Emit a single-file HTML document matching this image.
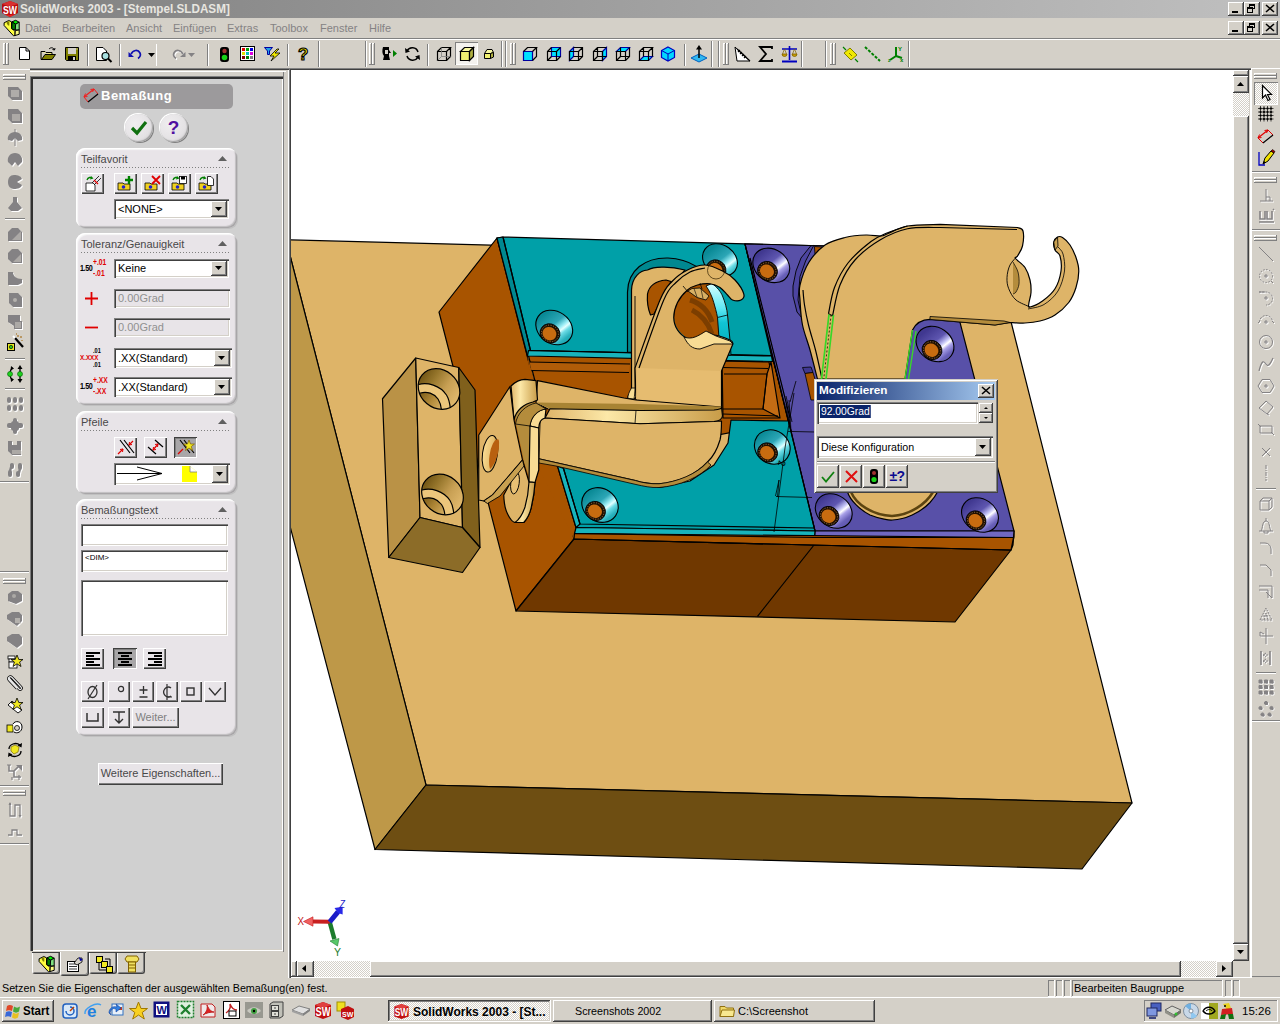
<!DOCTYPE html>
<html lang="de">
<head>
<meta charset="utf-8">
<title>SolidWorks 2003 - [Stempel.SLDASM]</title>
<style>
*{box-sizing:border-box;margin:0;padding:0}
html,body{width:1280px;height:1024px;overflow:hidden;background:#d4d0c8;font-family:"Liberation Sans",sans-serif;font-size:11px;color:#000}
.a{position:absolute}
.raised{box-shadow:inset -1px -1px #404040,inset 1px 1px #fff,inset -2px -2px #808080,inset 2px 2px #d4d0c8;background:#d4d0c8}
.sunken{box-shadow:inset -1px -1px #fff,inset 1px 1px #808080,inset -2px -2px #d4d0c8,inset 2px 2px #404040}
.thin-r{box-shadow:inset -1px -1px #808080,inset 1px 1px #fff}
.thin-s{box-shadow:inset -1px -1px #fff,inset 1px 1px #808080}
#title{left:0;top:0;width:1280px;height:18px;background:linear-gradient(90deg,#808080 0%,#c0c0c0 100%)}
#title .t{left:20px;top:1px;color:#e8e6e0;font-weight:bold;font-size:13px;line-height:16px;white-space:nowrap;transform:scaleX(.9);transform-origin:0 0}
.wb{width:16px;height:14px}
#menu{left:0;top:18px;width:1280px;height:20px}
#menu span{position:absolute;top:3px;color:#848284;font-size:11px;line-height:14px;white-space:nowrap}
.vsep{width:2px;height:22px;border-left:1px solid #808080;border-right:1px solid #fff;top:43px}
.grip{width:3px;height:22px;top:43px;box-shadow:inset -1px -1px #808080,inset 1px 1px #fff}
.hgrip{height:3px;width:22px;box-shadow:inset -1px -1px #808080,inset 1px 1px #fff}
.tbend{width:2px;height:26px;top:41px;border-left:1px solid #808080;border-right:1px solid #fff}
svg{position:absolute;overflow:visible}
.chk{background:repeating-conic-gradient(#fff 0 25%,#d4d0c8 0 50%) 0 0/2px 2px}
.ic{width:16px;height:16px}
</style>
</head>
<body>
<!-- TITLE BAR -->
<div id="title" class="a">
 <svg class="a" style="left:2px;top:1px" width="16" height="16" viewBox="0 0 16 16"><path d="M0 3L8 0L16 3L16 12L8 16L0 12Z" fill="#b80c0c"/><path d="M0 3L8 0L16 3L8 5.500Z" fill="#d83030"/><path d="M2 13L8 16L14 13L8 14Z" fill="#e82020"/><text x="1" y="12.800" font-family="Liberation Sans,sans-serif" font-size="11.500" font-weight="bold" fill="#fff" textLength="14" lengthAdjust="spacingAndGlyphs">SW</text></svg>
 <div class="a t">SolidWorks 2003 - [Stempel.SLDASM]</div>
 <div class="a wb raised" style="left:1228px;top:2px"><div class="a" style="left:4px;top:9px;width:6px;height:2px;background:#000"></div></div>
 <div class="a wb raised" style="left:1244px;top:2px"><div class="a" style="left:5px;top:2px;width:6px;height:5px;border:1px solid #000;border-top-width:2px"></div><div class="a" style="left:3px;top:5px;width:6px;height:6px;border:1px solid #000;border-top-width:2px;background:#d4d0c8"></div></div>
 <div class="a wb raised" style="left:1262px;top:2px"><svg style="left:4px;top:3px" width="8" height="7" viewBox="0 0 8 7"><path d="M0 0L8 7M8 0L0 7" stroke="#000" stroke-width="1.6"/></svg></div>
</div>
<!-- MENU BAR -->
<div id="menu" class="a">
 <svg style="left:3px;top:1px" width="18" height="18" viewBox="0 0 18 18"><path d="M1.100 3.800L5.800 1.500L8.500 2.800L8.500 9L12 12.500L12 16.500L10.500 16.800L1.100 6.500Z" fill="#ffff40" stroke="#000"/><path d="M3.300 3.400L6.300 2L6.300 6.500L5 6.500Z" fill="#808000"/><path d="M9 2.800L12.600 1.300L16.200 3.200L12.600 5.200Z" fill="#00f000" stroke="#000"/><path d="M9 2.800L12.600 5.200L12.300 11L8.800 10Z" fill="#008000" stroke="#000"/><path d="M12.600 5.200L16.200 3.200L16.200 11L12.300 11Z" fill="#80e080" stroke="#000"/><path d="M12.300 11.500L16.200 11L16.200 15.300L12 16.500Z" fill="#ffff80" stroke="#000"/></svg>
 <span style="left:25px">Datei</span><span style="left:62px">Bearbeiten</span><span style="left:126px">Ansicht</span><span style="left:173px">Einfügen</span><span style="left:227px">Extras</span><span style="left:270px">Toolbox</span><span style="left:320px">Fenster</span><span style="left:369px">Hilfe</span>
 <div class="a wb raised" style="left:1228px;top:3px"><div class="a" style="left:4px;top:9px;width:6px;height:2px;background:#000"></div></div>
 <div class="a wb raised" style="left:1244px;top:3px"><div class="a" style="left:5px;top:2px;width:6px;height:5px;border:1px solid #000;border-top-width:2px"></div><div class="a" style="left:3px;top:5px;width:6px;height:6px;border:1px solid #000;border-top-width:2px;background:#d4d0c8"></div></div>
 <div class="a wb raised" style="left:1262px;top:3px"><svg style="left:4px;top:3px" width="8" height="7" viewBox="0 0 8 7"><path d="M0 0L8 7M8 0L0 7" stroke="#000" stroke-width="1.6"/></svg></div>
</div>
<div class="a" style="left:0;top:38px;width:1280px;height:1px;background:#808080"></div>
<div class="a" style="left:0;top:39px;width:1280px;height:1px;background:#fff"></div>
<!-- TOOLBARS -->
<div id="toolbars" class="a" style="left:0;top:40px;width:1280px;height:28px">
<div class="a grip" style="left:3px;top:3px"></div><div class="a grip" style="left:6px;top:3px"></div>
<!-- new -->
<svg style="left:18px;top:7px" width="13" height="14" viewBox="0 0 13 14"><path d="M1.5 .5H8L11.5 4V12.5H1.5Z" fill="#fff" stroke="#000"/><path d="M8 .5V4H11.5" fill="none" stroke="#000"/></svg>
<!-- open -->
<svg style="left:40px;top:6px" width="17" height="15" viewBox="0 0 17 15"><path d="M1 5.5H5L6 6.5H12V9" fill="#f8f080" stroke="#000"/><path d="M1 5.5V13.5H12L15.5 8.5H5L1.5 13.5" fill="#808000" stroke="#000"/><path d="M9 3C11 1 13.5 1.5 14.5 4M14.5 4L12.5 3.5M14.5 4L15 2" fill="none" stroke="#000"/></svg>
<!-- save -->
<svg style="left:65px;top:7px" width="15" height="15" viewBox="0 0 15 15"><path d="M.5 .5H13.5V13.5H1.5L.5 12.5Z" fill="#808000" stroke="#000"/><rect x="3" y="1" width="8" height="6" fill="#d4d0c8"/><rect x="3" y="9" width="8" height="4.5" fill="#000"/><rect x="8" y="10" width="2" height="3" fill="#d4d0c8"/><rect x="11.5" y="1.5" width="1" height="1" fill="#fff"/></svg>
<div class="a vsep" style="left:87px;top:4px"></div>
<!-- preview -->
<svg style="left:96px;top:7px" width="17" height="16" viewBox="0 0 17 16"><path d="M.5 .5H7L10.5 4V13.5H.5Z" fill="#fff" stroke="#000"/><circle cx="9.5" cy="9" r="3.5" fill="#a8e0e0" stroke="#000" stroke-width="1.2"/><path d="M12 11.5L15.5 15" stroke="#000" stroke-width="2"/></svg>
<div class="a vsep" style="left:119px;top:4px"></div>
<!-- undo -->
<svg style="left:128px;top:9px" width="14" height="11" viewBox="0 0 14 11"><path d="M3 5C5 1 10 0 12 4C13 6 12 8 10 9.5" fill="none" stroke="#1010b0" stroke-width="1.7"/><path d="M.5 3L6 8H.5Z" fill="#1010b0"/></svg>
<svg style="left:148px;top:13px" width="7" height="4" viewBox="0 0 7 4"><path d="M0 0H7L3.5 4Z" fill="#000"/></svg>
<div class="a" style="left:156px;top:4px;width:1px;height:22px;background:#fff"></div>
<!-- redo (disabled) -->
<svg style="left:172px;top:9px" width="14" height="11" viewBox="0 0 14 11"><path d="M11 5C9 1 4 0 2 4C1 6 2 8 4 9.5" fill="none" stroke="#fff" stroke-width="1.7" transform="translate(1,1)"/><path d="M11 5C9 1 4 0 2 4C1 6 2 8 4 9.5" fill="none" stroke="#848284" stroke-width="1.7"/><path d="M13.5 3L8 8H13.5Z" fill="#848284"/></svg>
<svg style="left:188px;top:13px" width="7" height="4" viewBox="0 0 7 4"><path d="M0 0H7L3.5 4Z" fill="#848284"/></svg>
<div class="a vsep" style="left:207px;top:4px"></div>
<!-- traffic light -->
<svg style="left:219px;top:6px" width="11" height="17" viewBox="0 0 11 17"><rect x="1" y="1" width="9" height="15" rx="3" fill="#000"/><circle cx="5.5" cy="5" r="2.2" fill="#a03030"/><circle cx="5.5" cy="11.5" r="2.8" fill="#18d018"/></svg>
<!-- palette -->
<svg style="left:240px;top:6px" width="15" height="15" viewBox="0 0 15 15"><rect x=".5" y=".5" width="14" height="14" fill="#fff" stroke="#000"/><rect x="2" y="2" width="3" height="3" fill="#e00000"/><rect x="6" y="2" width="3" height="3" fill="#00a000"/><rect x="10" y="2" width="3" height="3" fill="#0000e0"/><rect x="2" y="6" width="3" height="3" fill="#e0e000"/><rect x="6" y="6" width="3" height="3" fill="#00c0c0"/><rect x="10" y="6" width="3" height="3" fill="#e000e0"/><rect x="2" y="10" width="3" height="3" fill="#800000"/><rect x="6" y="10" width="3" height="3" fill="#008000"/><rect x="10" y="10" width="3" height="3" fill="#808080"/></svg>
<!-- filter -->
<svg style="left:264px;top:6px" width="17" height="16" viewBox="0 0 17 16"><path d="M.5 1.5H8.5L5.5 5V8.5H3.5V5Z" fill="#20a0e8" stroke="#0000a0"/><path d="M13 3L6 10H10L7 15L16 7H11L15 3Z" fill="#f0e800" stroke="#000" stroke-width=".8"/></svg>
<div class="a vsep" style="left:287px;top:4px"></div>
<!-- help ? -->
<svg style="left:298px;top:5px" width="11" height="17" viewBox="0 0 11 17"><text x="0" y="14.5" font-family="Liberation Sans,sans-serif" font-weight="bold" font-size="17" fill="#f0e000" stroke="#000" stroke-width="1.1">?</text></svg>
<div class="a tbend" style="left:318px;top:1px"></div>
<!-- toolbar 2 -->
<div class="a tbend" style="left:365px;top:1px"></div>
<div class="a grip" style="left:369px;top:3px"></div><div class="a grip" style="left:372px;top:3px"></div>
<svg style="left:381px;top:6px" width="17" height="16" viewBox="0 0 17 16"><path d="M2 1H8V4L10 7H8V10L9 14H2L3 10C1 8 1 4 2 1Z" fill="#000"/><rect x="4" y="4" width="3" height="4" fill="#d4d0c8"/><path d="M12 4L16 7.5L12 11Z" fill="#008000"/></svg>
<svg style="left:404px;top:6px" width="17" height="16" viewBox="0 0 17 16"><path d="M14 6A6 6 0 0 0 3 5M3 10A6 6 0 0 0 14 11" fill="none" stroke="#000" stroke-width="1.5"/><path d="M1 2L1.5 7L6 5.5Z M16 14L15.5 9L11 10.5Z" fill="#000"/></svg>
<div class="a vsep" style="left:427px;top:4px"></div>
<svg style="left:436px;top:6px" width="16" height="16" viewBox="0 0 16 16"><path d="M1.5 5.5H10.5V14.5H1.5Z M1.5 5.5L5.5 1.5H14.5L10.5 5.5 M14.5 1.5V10.5L10.5 14.5" fill="none" stroke="#000" stroke-width="1.2"/><path d="M5.5 1.5V10.5H14.5M5.5 10.5L1.5 14.5" fill="none" stroke="#808080" stroke-width=".8"/></svg>
<div class="a" style="left:455px;top:2px;width:23px;height:23px;background:#f4f2ee;box-shadow:inset 1px 1px #808080,inset -1px -1px #fff"></div>
<svg style="left:459px;top:6px" width="16" height="16" viewBox="0 0 16 16"><path d="M1.5 5.5H10.5V14.5H1.5Z" fill="#f0f070" stroke="#000" stroke-width="1.2"/><path d="M1.5 5.5L5.5 1.5H14.5L10.5 5.5Z" fill="#f8f8a0" stroke="#000" stroke-width="1.2"/><path d="M14.5 1.5V10.5L10.5 14.5V5.5Z" fill="#b0b040" stroke="#000" stroke-width="1.2"/></svg>
<svg style="left:483px;top:8px" width="12" height="12" viewBox="0 0 12 12"><path d="M1.5 5.5H7.5V10.5H1.5Z" fill="#f0f070" stroke="#000"/><path d="M1.5 5.5L4 1.5H9L10.5 4.5L7.5 5.5Z" fill="#f8f8a0" stroke="#000"/><path d="M10.5 4.5V9L7.5 10.5V5.5Z" fill="#b0b040" stroke="#000"/></svg>
<div class="a tbend" style="left:501px;top:1px"></div>
<!-- toolbar 3: view cubes -->
<div class="a tbend" style="left:505px;top:1px"></div>
<div class="a grip" style="left:510px;top:3px"></div><div class="a grip" style="left:513px;top:3px"></div>
<svg style="left:522px;top:6px" width="16" height="16" viewBox="0 0 16 16"><path d="M1.5 5.5H10.5V14.5H1.5Z" fill="#00e0ff" stroke="#0000a0" stroke-width="1.2"/><path d="M1.5 5.5L5.5 1.5H14.5L10.5 5.5 M14.5 1.5V10.5L10.5 14.5" fill="none" stroke="#000" stroke-width="1.2"/></svg>
<svg style="left:546px;top:6px" width="16" height="16" viewBox="0 0 16 16"><path d="M5.5 1.5H14.5V10.5H5.5Z" fill="#00e0ff" stroke="#0000a0" stroke-width="1.2"/><path d="M1.5 5.5H10.5V14.5H1.5Z M1.5 5.5L5.5 1.5M10.5 5.5L14.5 1.5M10.5 14.5L14.5 10.5M1.5 14.5L5.5 10.5" fill="none" stroke="#000" stroke-width="1.2"/></svg>
<svg style="left:568px;top:6px" width="16" height="16" viewBox="0 0 16 16"><path d="M1.5 5.5L5.5 1.5V10.5L1.5 14.5Z" fill="#00e0ff" stroke="#0000a0" stroke-width="1.2"/><path d="M1.5 5.5H10.5V14.5H1.5Z M5.5 1.5H14.5V10.5H5.5M10.5 5.5L14.5 1.5M10.5 14.5L14.5 10.5" fill="none" stroke="#000" stroke-width="1.2"/></svg>
<svg style="left:592px;top:6px" width="16" height="16" viewBox="0 0 16 16"><path d="M10.5 5.5L14.5 1.5V10.5L10.5 14.5Z" fill="#00e0ff" stroke="#0000a0" stroke-width="1.2"/><path d="M1.5 5.5H10.5V14.5H1.5Z M1.5 5.5L5.5 1.5H14.5M5.5 1.5V10.5H14.5M1.5 14.5L5.5 10.5" fill="none" stroke="#000" stroke-width="1.2"/></svg>
<svg style="left:615px;top:6px" width="16" height="16" viewBox="0 0 16 16"><path d="M1.5 5.5L5.5 1.5H14.5L10.5 5.5Z" fill="#00e0ff" stroke="#0000a0" stroke-width="1.2"/><path d="M1.5 5.5H10.5V14.5H1.5Z M14.5 1.5V10.5L10.5 14.5M5.5 1.5V10.5H14.5M1.5 14.5L5.5 10.5" fill="none" stroke="#000" stroke-width="1.2"/></svg>
<svg style="left:638px;top:6px" width="16" height="16" viewBox="0 0 16 16"><path d="M1.5 14.5L5.5 10.5H14.5L10.5 14.5Z" fill="#00e0ff" stroke="#0000a0" stroke-width="1.2"/><path d="M1.5 5.5H10.5V14.5H1.5Z M1.5 5.5L5.5 1.5H14.5L10.5 5.5M14.5 1.5V10.5M5.5 1.5V10.5" fill="none" stroke="#000" stroke-width="1.2"/></svg>
<svg style="left:660px;top:6px" width="16" height="16" viewBox="0 0 16 16"><path d="M8 1L14.5 4.5V11.5L8 15L1.5 11.5V4.5Z" fill="#00d8ff" stroke="#0000c0" stroke-width="1.2"/><path d="M1.5 4.5L8 8L14.5 4.5M8 8V15" fill="none" stroke="#0000c0" stroke-width="1"/></svg>
<div class="a vsep" style="left:684px;top:4px"></div>
<svg style="left:690px;top:5px" width="18" height="18" viewBox="0 0 18 18"><path d="M1 13L9 9L17 13L9 17Z" fill="#30b8f0" stroke="#0060c0"/><path d="M9 13V3" stroke="#000" stroke-width="1.5"/><path d="M9 0L12 4.5H6Z" fill="#000"/></svg>
<div class="a tbend" style="left:711px;top:1px"></div>
<!-- toolbar 4 -->
<div class="a tbend" style="left:718px;top:1px"></div>
<div class="a grip" style="left:723px;top:3px"></div><div class="a grip" style="left:726px;top:3px"></div>
<svg style="left:734px;top:6px" width="17" height="16" viewBox="0 0 17 16"><path d="M1 1L16 15H3Z" fill="#fff" stroke="#000" stroke-width="1"/><path d="M3 3L16 15M4 6l2-2M6 8l2-2M8 10l2-2M10 12l2-2" stroke="#000" stroke-width="1.2" fill="none"/></svg>
<svg style="left:759px;top:6px" width="14" height="16" viewBox="0 0 14 16"><path d="M13 3V1H1L7 8L1 15H13V13" fill="none" stroke="#000" stroke-width="1.8"/></svg>
<svg style="left:781px;top:5px" width="17" height="18" viewBox="0 0 17 18"><path d="M8.5 1V15M1 4H16" stroke="#0000c0" stroke-width="1.6"/><path d="M1 16.5H16" stroke="#0000c0" stroke-width="2"/><path d="M1 9H6A2.5 2.5 0 0 1 1 9ZM11 9H16A2.5 2.5 0 0 1 11 9Z" fill="#c8a000" stroke="#806000" stroke-width=".8"/><path d="M3.5 4L1.5 9M3.5 4L5.5 9M13.5 4L11.5 9M13.5 4L15.5 9" stroke="#806000" stroke-width=".7"/></svg>
<div class="a tbend" style="left:801px;top:1px"></div>
<!-- toolbar 5 -->
<div class="a tbend" style="left:825px;top:1px"></div>
<div class="a grip" style="left:830px;top:3px"></div><div class="a grip" style="left:833px;top:3px"></div>
<svg style="left:841px;top:5px" width="18" height="18" viewBox="0 0 18 18"><path d="M9 3L16 10L10 15L3 8Z" fill="#f0e800" stroke="#808000"/><path d="M2 2L5 5M14 14L17 17" stroke="#008000" stroke-width="1.2"/><path d="M8 8L11 11" stroke="#808000"/></svg>
<svg style="left:864px;top:6px" width="17" height="16" viewBox="0 0 17 16"><path d="M1 1L16 15" stroke="#008000" stroke-width="2" stroke-dasharray="3 1.5"/></svg>
<svg style="left:888px;top:5px" width="17" height="17" viewBox="0 0 17 17"><path d="M8 2V11L2 15M8 11L14 13" stroke="#008000" stroke-width="2" fill="none"/><text x="10" y="6" font-size="6" font-family="Liberation Sans,sans-serif" font-weight="bold" fill="#008000">Y</text><text x="12" y="17" font-size="6" font-family="Liberation Sans,sans-serif" font-weight="bold" fill="#008000">x</text><text x="0" y="17" font-size="5" font-family="Liberation Sans,sans-serif" font-weight="bold" fill="#008000">z</text></svg>
<div class="a tbend" style="left:908px;top:1px"></div>

</div>
<div id="tbline" class="a" style="left:30px;top:68px;width:259px;height:2px;border-top:1px solid #808080;border-bottom:1px solid #404040"></div><div class="a" style="left:0;top:69px;width:30px;height:1px;background:#fff"></div><div class="a" style="left:30px;top:71px;width:256px;height:1px;background:#fff"></div>
<!-- LEFT ICON COLUMN -->
<div id="leftcol" class="a" style="left:0;top:70px;width:30px;height:908px">
<div class="a hgrip" style="left:3px;top:4px;width:23px"></div><div class="a hgrip" style="left:3px;top:7px;width:23px"></div>
<svg style="left:6.0px;top:15.0px" width="18" height="18" viewBox="0 0 18 18"><g transform="translate(1,1)" fill="#fff" stroke="#fff" stroke-width="0"><path d="M2 2H12L16 6V15H6L2 11Z"/><rect x="5" y="5" width="8" height="7" fill="#d4d0c8" stroke="none" opacity=".55"/></g><g fill="#848284" stroke="#848284" stroke-width="0"><path d="M2 2H12L16 6V15H6L2 11Z"/><rect x="5" y="5" width="8" height="7" fill="#d4d0c8" stroke="none" opacity=".55"/></g></svg>
<svg style="left:6.0px;top:37.0px" width="18" height="18" viewBox="0 0 18 18"><g transform="translate(1,1)" fill="#fff" stroke="#fff" stroke-width="0"><path d="M2 2H12L16 6V16H6L2 12Z"/><rect x="6" y="7" width="8" height="7" fill="#d4d0c8" opacity=".5"/></g><g fill="#848284" stroke="#848284" stroke-width="0"><path d="M2 2H12L16 6V16H6L2 12Z"/><rect x="6" y="7" width="8" height="7" fill="#d4d0c8" opacity=".5"/></g></svg>
<svg style="left:6.0px;top:59.0px" width="18" height="18" viewBox="0 0 18 18"><g transform="translate(1,1)" fill="#fff" stroke="#fff" stroke-width="0"><path d="M9 3C14 3 17 7 16 11L12 12L9 9L6 12L2 11C1 7 4 3 9 3Z"/><rect x="8.5" y="0" width="1" height="17"/></g><g fill="#848284" stroke="#848284" stroke-width="0"><path d="M9 3C14 3 17 7 16 11L12 12L9 9L6 12L2 11C1 7 4 3 9 3Z"/><rect x="8.5" y="0" width="1" height="17"/></g></svg>
<svg style="left:6.0px;top:81.0px" width="18" height="18" viewBox="0 0 18 18"><g transform="translate(1,1)" fill="#fff" stroke="#fff" stroke-width="0"><path d="M9 2C14 2 17 6 16 11L12 15L9 11L6 15L2 11C1 6 4 2 9 2Z"/></g><g fill="#848284" stroke="#848284" stroke-width="0"><path d="M9 2C14 2 17 6 16 11L12 15L9 11L6 15L2 11C1 6 4 2 9 2Z"/></g></svg>
<svg style="left:6.0px;top:103.0px" width="18" height="18" viewBox="0 0 18 18"><g transform="translate(1,1)" fill="#fff" stroke="#fff" stroke-width="0"><path d="M8 2C12 2 15 3 16 6L11 9L16 12C15 15 12 16 8 16C4 16 2 13 2 9C2 5 4 2 8 2Z"/></g><g fill="#848284" stroke="#848284" stroke-width="0"><path d="M8 2C12 2 15 3 16 6L11 9L16 12C15 15 12 16 8 16C4 16 2 13 2 9C2 5 4 2 8 2Z"/></g></svg>
<svg style="left:6.0px;top:125.0px" width="18" height="18" viewBox="0 0 18 18"><g transform="translate(1,1)" fill="#fff" stroke="#fff" stroke-width="0"><path d="M7 2H11V7L16 13L12 16H5L2 13L7 7Z"/></g><g fill="#848284" stroke="#848284" stroke-width="0"><path d="M7 2H11V7L16 13L12 16H5L2 13L7 7Z"/></g></svg>
<div class="a" style="left:5px;top:148px;width:20px;height:2px;border-top:1px solid #808080;border-bottom:1px solid #fff"></div>
<svg style="left:6.0px;top:155.0px" width="18" height="18" viewBox="0 0 18 18"><g transform="translate(1,1)" fill="#fff" stroke="#fff" stroke-width="0"><path d="M6 3H12L16 7V16H2V7Z"/><path d="M6 15L15 6V15Z" fill="#d4d0c8" opacity=".5"/></g><g fill="#848284" stroke="#848284" stroke-width="0"><path d="M6 3H12L16 7V16H2V7Z"/><path d="M6 15L15 6V15Z" fill="#d4d0c8" opacity=".5"/></g></svg>
<svg style="left:6.0px;top:177.0px" width="18" height="18" viewBox="0 0 18 18"><g transform="translate(1,1)" fill="#fff" stroke="#fff" stroke-width="0"><path d="M6 2H12L16 6V16H6L2 12V6Z"/><path d="M7 15L15 7V15Z" fill="#d4d0c8" opacity=".5"/></g><g fill="#848284" stroke="#848284" stroke-width="0"><path d="M6 2H12L16 6V16H6L2 12V6Z"/><path d="M7 15L15 7V15Z" fill="#d4d0c8" opacity=".5"/></g></svg>
<svg style="left:6.0px;top:199.0px" width="18" height="18" viewBox="0 0 18 18"><g transform="translate(1,1)" fill="#fff" stroke="#fff" stroke-width="0"><path d="M2 3H7C7 7 10 10 16 10V14L12 16H2Z"/></g><g fill="#848284" stroke="#848284" stroke-width="0"><path d="M2 3H7C7 7 10 10 16 10V14L12 16H2Z"/></g></svg>
<svg style="left:6.0px;top:221.0px" width="18" height="18" viewBox="0 0 18 18"><g transform="translate(1,1)" fill="#fff" stroke="#fff" stroke-width="0"><path d="M3 2H12L16 6V16H7L3 12Z"/><circle cx="9" cy="9" r="2" fill="#d4d0c8" opacity=".6"/></g><g fill="#848284" stroke="#848284" stroke-width="0"><path d="M3 2H12L16 6V16H7L3 12Z"/><circle cx="9" cy="9" r="2" fill="#d4d0c8" opacity=".6"/></g></svg>
<svg style="left:6.0px;top:243.0px" width="18" height="18" viewBox="0 0 18 18"><g transform="translate(1,1)" fill="#fff" stroke="#fff" stroke-width="0"><path d="M2 2H14V8H16V16H8V13L2 9Z"/><rect x="9" y="9" width="6" height="6" fill="#d4d0c8" opacity=".5"/></g><g fill="#848284" stroke="#848284" stroke-width="0"><path d="M2 2H14V8H16V16H8V13L2 9Z"/><rect x="9" y="9" width="6" height="6" fill="#d4d0c8" opacity=".5"/></g></svg>
<svg style="left:6.0px;top:264.0px" width="18" height="18" viewBox="0 0 18 18"><rect x="1.500" y="9.500" width="7" height="7" fill="#e8e820" stroke="#000"/><circle cx="5" cy="13" r="1.700" fill="#20c020" stroke="#000" stroke-width=".6"/><path d="M9 4L17 13" stroke="#000" stroke-width="2.200"/><path d="M7 2L9 4" stroke="#fff" stroke-width="2"/><path d="M12 1v2M14 3h2M16 6v1M10 0h1" stroke="#a06000" stroke-width="1"/></svg>
<div class="a" style="left:5px;top:288px;width:20px;height:2px;border-top:1px solid #808080;border-bottom:1px solid #fff"></div>
<svg style="left:6.0px;top:294.5px" width="18" height="18" viewBox="0 0 18 18"><path d="M7 3C3 5 3 13 7 15" fill="none" stroke="#000" stroke-width="1.300"/><path d="M5 1L8 3.500L4.500 5.500ZM5 17L8 14.500L4.500 12.500Z" fill="#000"/><circle cx="4" cy="9" r="2.500" fill="#20d020" stroke="#006000" stroke-width=".6"/><path d="M14 2V16" stroke="#000" stroke-width="1.300"/><path d="M14 0L16.500 4H11.500ZM14 18L16.500 14H11.500Z" fill="#000"/><circle cx="14" cy="9" r="2.500" fill="#20d020" stroke="#006000" stroke-width=".6"/></svg>
<div class="a" style="left:5px;top:318px;width:20px;height:2px;border-top:1px solid #808080;border-bottom:1px solid #fff"></div>
<svg style="left:6.0px;top:325.0px" width="18" height="18" viewBox="0 0 18 18"><g transform="translate(1,1)" fill="#fff" stroke="#fff" stroke-width="0"><rect x="1" y="2" width="4" height="6" rx="2"/><rect x="1" y="10" width="4" height="6" rx="2"/><rect x="7" y="2" width="4" height="6" rx="2"/><rect x="7" y="10" width="4" height="6" rx="2"/><rect x="13" y="2" width="4" height="6" rx="2"/><rect x="13" y="10" width="4" height="6" rx="2"/></g><g fill="#848284" stroke="#848284" stroke-width="0"><rect x="1" y="2" width="4" height="6" rx="2"/><rect x="1" y="10" width="4" height="6" rx="2"/><rect x="7" y="2" width="4" height="6" rx="2"/><rect x="7" y="10" width="4" height="6" rx="2"/><rect x="13" y="2" width="4" height="6" rx="2"/><rect x="13" y="10" width="4" height="6" rx="2"/></g></svg>
<svg style="left:6.0px;top:347.0px" width="18" height="18" viewBox="0 0 18 18"><g transform="translate(1,1)" fill="#fff" stroke="#fff" stroke-width="0"><rect x="7" y="1" width="4" height="6" rx="2"/><rect x="7" y="11" width="4" height="6" rx="2"/><rect x="1" y="6" width="6" height="5" rx="2"/><rect x="11" y="6" width="6" height="5" rx="2"/><rect x="5" y="4" width="8" height="10" rx="3"/></g><g fill="#848284" stroke="#848284" stroke-width="0"><rect x="7" y="1" width="4" height="6" rx="2"/><rect x="7" y="11" width="4" height="6" rx="2"/><rect x="1" y="6" width="6" height="5" rx="2"/><rect x="11" y="6" width="6" height="5" rx="2"/><rect x="5" y="4" width="8" height="10" rx="3"/></g></svg>
<svg style="left:6.0px;top:369.0px" width="18" height="18" viewBox="0 0 18 18"><g transform="translate(1,1)" fill="#fff" stroke="#fff" stroke-width="0"><path d="M2 2H6V6H11V2H15V16H6L2 12Z"/><rect x="6" y="11" width="9" height="4" fill="#d4d0c8" opacity=".5"/></g><g fill="#848284" stroke="#848284" stroke-width="0"><path d="M2 2H6V6H11V2H15V16H6L2 12Z"/><rect x="6" y="11" width="9" height="4" fill="#d4d0c8" opacity=".5"/></g></svg>
<svg style="left:6.0px;top:391.0px" width="18" height="18" viewBox="0 0 18 18"><g transform="translate(1,1)" fill="#fff" stroke="#fff" stroke-width="0"><rect x="2" y="9" width="4" height="7" rx="2"/><rect x="12" y="2" width="4" height="7" rx="2"/><path d="M6 3L4 10M14 8L12 15" stroke-width="2.500" fill="none"/><rect x="4" y="2" width="4" height="6" rx="2"/><rect x="10" y="10" width="4" height="6" rx="2"/></g><g fill="#848284" stroke="#848284" stroke-width="0"><rect x="2" y="9" width="4" height="7" rx="2"/><rect x="12" y="2" width="4" height="7" rx="2"/><path d="M6 3L4 10M14 8L12 15" stroke-width="2.500" fill="none"/><rect x="4" y="2" width="4" height="6" rx="2"/><rect x="10" y="10" width="4" height="6" rx="2"/></g></svg>
<div class="a" style="left:0px;top:411px;width:29px;height:2px;border-top:1px solid #808080;border-bottom:1px solid #fff"></div>
<div class="a" style="left:0px;top:501px;width:29px;height:2px;border-top:1px solid #808080;border-bottom:1px solid #fff"></div>
<div class="a hgrip" style="left:3px;top:508px;width:23px"></div><div class="a hgrip" style="left:3px;top:511px;width:23px"></div>
<svg style="left:6.0px;top:518.0px" width="18" height="18" viewBox="0 0 18 18"><g transform="translate(1,1)" fill="#fff" stroke="#fff" stroke-width="0"><path d="M2 6L6 3H12L16 6V13L10 16L2 13Z"/><circle cx="8" cy="8" r="2" fill="#d4d0c8" opacity=".5"/></g><g fill="#848284" stroke="#848284" stroke-width="0"><path d="M2 6L6 3H12L16 6V13L10 16L2 13Z"/><circle cx="8" cy="8" r="2" fill="#d4d0c8" opacity=".5"/></g></svg>
<svg style="left:6.0px;top:540.0px" width="18" height="18" viewBox="0 0 18 18"><g transform="translate(1,1)" fill="#fff" stroke="#fff" stroke-width="0"><path d="M1 5L6 2H13L16 5V11L11 16L1 9Z"/><rect x="9" y="8" width="5" height="5" fill="#d4d0c8" opacity=".6"/></g><g fill="#848284" stroke="#848284" stroke-width="0"><path d="M1 5L6 2H13L16 5V11L11 16L1 9Z"/><rect x="9" y="8" width="5" height="5" fill="#d4d0c8" opacity=".6"/></g></svg>
<svg style="left:6.0px;top:562.0px" width="18" height="18" viewBox="0 0 18 18"><g transform="translate(1,1)" fill="#fff" stroke="#fff" stroke-width="0"><path d="M1 5L6 2H13L16 5V12L11 16L1 9Z"/></g><g fill="#848284" stroke="#848284" stroke-width="0"><path d="M1 5L6 2H13L16 5V12L11 16L1 9Z"/></g></svg>
<svg style="left:6.0px;top:583.0px" width="18" height="18" viewBox="0 0 18 18"><rect x="2" y="3" width="7" height="3" fill="#fff" stroke="#000" stroke-width=".8"/><rect x="3" y="6" width="7" height="3" fill="#fff" stroke="#000" stroke-width=".8"/><rect x="3" y="9" width="8" height="6" fill="#fff" stroke="#000" stroke-width=".8"/><path d="M11 2L12.800 6.500H17L13.600 9L15 13.500L11 10.800L7 13.500L8.400 9L5 6.500H9.200Z" fill="#f0e820" stroke="#000" stroke-width=".8"/></svg>
<svg style="left:6.0px;top:605.0px" width="18" height="18" viewBox="0 0 18 18"><path d="M3 3L13 14C14.500 15.500 16.500 13.500 15 12L6 2.500C4 .5 1 3 3 5L11 13.500" fill="none" stroke="#000" stroke-width="2.600"/><path d="M3 3L13 14C14.500 15.500 16.500 13.500 15 12L6 2.500C4 .5 1 3 3 5L11 13.500" fill="none" stroke="#e8e8e8" stroke-width="1.200"/></svg>
<svg style="left:6.0px;top:627.0px" width="18" height="18" viewBox="0 0 18 18"><path d="M2 8L6 4L16 13L12 16Z" fill="#fff" stroke="#000" stroke-width=".9"/><path d="M11 1L12.800 5.500H17L13.600 8L15 12.500L11 9.800L7 12.500L8.400 8L5 5.500H9.200Z" fill="#f0e820" stroke="#000" stroke-width=".8"/></svg>
<svg style="left:6.0px;top:649.0px" width="18" height="18" viewBox="0 0 18 18"><rect x="1" y="6" width="6" height="7" fill="#f0e820" stroke="#000" stroke-width=".8"/><path d="M7 5C9 1 16 2 16 8C16 13 11 15 8 13" fill="#fff" stroke="#000" stroke-width="1"/><circle cx="11" cy="9" r="2.500" fill="#d4d0c8" stroke="#000" stroke-width=".8"/></svg>
<svg style="left:6.0px;top:671.0px" width="18" height="18" viewBox="0 0 18 18"><path d="M5 6L9 4L13 6L12 11L8 13L5 10Z" fill="#f0e820" stroke="#807000" stroke-width=".7"/><path d="M3 8C3 3 10 1 14 4M15 10C15 15 8 17 4 14" fill="none" stroke="#000" stroke-width="1.300"/><path d="M16 2L15.500 6.500L11.500 4.500ZM2 16L2.500 11.500L6.500 13.500Z" fill="#000"/></svg>
<svg style="left:6.0px;top:693.0px" width="18" height="18" viewBox="0 0 18 18"><g transform="translate(1,1)" fill="#fff" stroke="#fff" stroke-width="0"><path d="M3 2V8H8V14H15M8 8L13 3" fill="none" stroke-width="1.600"/><path d="M10 2H16V8Z"/><path d="M1 2H5M6 14V17M13 12V17" stroke-width="1.200" fill="none"/></g><g fill="#848284" stroke="#848284" stroke-width="0"><path d="M3 2V8H8V14H15M8 8L13 3" fill="none" stroke-width="1.600"/><path d="M10 2H16V8Z"/><path d="M1 2H5M6 14V17M13 12V17" stroke-width="1.200" fill="none"/></g></svg>
<div class="a" style="left:0px;top:715px;width:29px;height:2px;border-top:1px solid #808080;border-bottom:1px solid #fff"></div>
<div class="a hgrip" style="left:3px;top:720px;width:23px"></div><div class="a hgrip" style="left:3px;top:723px;width:23px"></div>
<svg style="left:6.0px;top:731.0px" width="18" height="18" viewBox="0 0 18 18"><g transform="translate(1,1)" fill="#fff" stroke="#fff" stroke-width="0"><path d="M4 2V15H9V4H14V15" fill="none" stroke-width="1.300"/><path d="M4 1L5.500 4H2.500ZM14 17L15.500 14H12.500Z"/></g><g fill="#848284" stroke="#848284" stroke-width="0"><path d="M4 2V15H9V4H14V15" fill="none" stroke-width="1.300"/><path d="M4 1L5.500 4H2.500ZM14 17L15.500 14H12.500Z"/></g></svg>
<svg style="left:6.0px;top:752.0px" width="18" height="18" viewBox="0 0 18 18"><g transform="translate(1,1)" fill="#fff" stroke="#fff" stroke-width="0"><path d="M2 13H6V8H11V13H16" fill="none" stroke-width="1.300"/></g><g fill="#848284" stroke="#848284" stroke-width="0"><path d="M2 13H6V8H11V13H16" fill="none" stroke-width="1.300"/></g></svg>
<div class="a" style="left:0px;top:773px;width:29px;height:2px;border-top:1px solid #808080;border-bottom:1px solid #fff"></div>
</div>
<!-- PROPERTY PANEL -->
<div id="panel" class="a" style="left:30px;top:76px;width:254px;height:900px">
<div class="a" style="left:0;top:0;width:253px;height:875px;background:#d0d0d0;box-shadow:inset 1px 1px #808080,inset 3px 3px #303030,inset -1px -1px #fff,inset -2px -2px #d4d0c8"></div>
<div class="a " style="left:50px;top:8px;width:153px;height:25px;background:#9c9a9c;border-radius:5px"><svg style="left:3px;top:4px" width="17" height="17" viewBox="0 0 17 17"><path d="M1 9L11 1" stroke="#f02020" stroke-width="1.2"/><path d="M1 9L5 14M11 1L15 6" stroke="#f02020"/><path d="M5 14L15 6" stroke="#000" stroke-width="1.2"/><path d="M2.5 5.500L1 9L4.500 8.500M9.500 4L11 1L7.500 1.500" stroke="#f02020" fill="none"/></svg><div class="a" style="left:21px;top:4px;color:#fff;font-weight:bold;font-size:13px;line-height:16px;letter-spacing:.5px;white-space:nowrap">Bemaßung</div></div>
<div class="a" style="left:94.5px;top:38px;width:28px;height:28px;border-radius:50%;background:radial-gradient(circle at 35% 35%,#f0eef0 0,#e4e2e4 60%,#c8c6c8 100%);box-shadow:1px 1px 0 #808080,-1px -1px 0 #fff,inset -1px -1px 1px #a0a0a0"><svg style="left:5px;top:6px" width="18" height="16" viewBox="0 0 18 16"><path d="M2 8L7 13L16 2" fill="none" stroke="#107010" stroke-width="3.2"/></svg></div>
<div class="a" style="left:129.5px;top:38px;width:28px;height:28px;border-radius:50%;background:radial-gradient(circle at 35% 35%,#f0eef0 0,#e4e2e4 60%,#c8c6c8 100%);box-shadow:1px 1px 0 #808080,-1px -1px 0 #fff,inset -1px -1px 1px #a0a0a0"><div class="a" style="left:0;top:3px;width:28px;text-align:center;color:#5010a0;font-weight:bold;font-size:19px;line-height:22px">?</div></div>
<div class="a " style="left:46px;top:72px;width:161px;height:80px;background:#e8e4e8;border-radius:9px;box-shadow:inset 1px 1px 0 #fff,inset 2px 2px 1px #f8f8f8,inset -1px -1px 0 #a8a6a8,inset -2px -2px 1px #c0bec0,1px 1px 0 #c0c0c0"><div class="a" style="left:5px;top:5px;color:#484848;font-size:11px;line-height:13px;white-space:nowrap">Teilfavorit</div><svg style="left:142px;top:8px" width="9" height="5" viewBox="0 0 9 5"><path d="M0 5H9L4.500 0Z" fill="#606060"/></svg><div class="a" style="left:5px;top:19px;width:148px;height:1px;background:repeating-linear-gradient(90deg,#808080 0 1px,transparent 1px 3px)"></div></div>
<div class="a " style="left:51px;top:97px;width:23px;height:21px;background:#e8e4e8;box-shadow:inset 1px 1px #fff,inset -1px -1px #404040,inset -2px -2px #808080"><svg style="left:3px;top:2px" width="17" height="17" viewBox="0 0 17 17"><path d="M2 8H9L11 10V16H2Z" fill="#fff" stroke="#000" stroke-width=".8"/><path d="M3 5C4 2 7 2 8 3" fill="none" stroke="#008000" stroke-width="1.300"/><path d="M7 1L9.500 3.500L6 4.500Z" fill="#008000"/><path d="M8 8L15 1M10 10L17 3" stroke="#000" stroke-width=".8"/><path d="M10 5L14 9" stroke="#e00000" stroke-width="1.200"/></svg></div>
<div class="a " style="left:84px;top:97px;width:23px;height:21px;background:#e8e4e8;box-shadow:inset 1px 1px #fff,inset -1px -1px #404040,inset -2px -2px #808080"><svg style="left:3px;top:2px" width="17" height="17" viewBox="0 0 17 17"><path d="M1 8H6L7 9H13V15H1Z" fill="#f0d020" stroke="#000" stroke-width=".8"/><circle cx="6.500" cy="12" r="1.800" fill="#2020d0"/><path d="M12 1V9M8 5H16" stroke="#008000" stroke-width="2.400"/></svg></div>
<div class="a " style="left:111px;top:97px;width:23px;height:21px;background:#e8e4e8;box-shadow:inset 1px 1px #fff,inset -1px -1px #404040,inset -2px -2px #808080"><svg style="left:3px;top:2px" width="17" height="17" viewBox="0 0 17 17"><path d="M1 8H6L7 9H13V15H1Z" fill="#f0d020" stroke="#000" stroke-width=".8"/><circle cx="6.500" cy="12" r="1.800" fill="#2020d0"/><path d="M8 1L16 9M16 1L8 9" stroke="#e00000" stroke-width="1.800"/></svg></div>
<div class="a " style="left:138px;top:97px;width:23px;height:21px;background:#e8e4e8;box-shadow:inset 1px 1px #fff,inset -1px -1px #404040,inset -2px -2px #808080"><svg style="left:3px;top:2px" width="17" height="17" viewBox="0 0 17 17"><path d="M1 8H6L7 9H13V15H1Z" fill="#f0d020" stroke="#000" stroke-width=".8"/><circle cx="6.500" cy="12" r="1.800" fill="#2020d0"/><rect x="8.500" y="1.500" width="7" height="7" fill="#fff" stroke="#000" stroke-width=".8"/><rect x="10" y="1.500" width="4" height="3" fill="#000"/><path d="M2 5C3 2 6 2 7 3" fill="none" stroke="#008000" stroke-width="1.300"/><path d="M6 1L8.500 3.500L5 4.500Z" fill="#008000"/></svg></div>
<div class="a " style="left:165px;top:97px;width:23px;height:21px;background:#e8e4e8;box-shadow:inset 1px 1px #fff,inset -1px -1px #404040,inset -2px -2px #808080"><svg style="left:3px;top:2px" width="17" height="17" viewBox="0 0 17 17"><path d="M1 8H6L7 9H13V15H1Z" fill="#f0d020" stroke="#000" stroke-width=".8"/><circle cx="6.500" cy="12" r="1.800" fill="#2020d0"/><path d="M9.500 1.500H13L15.500 4V10.500H9.500Z" fill="#fff" stroke="#000" stroke-width=".8"/><path d="M2 5C3 2 6 2 7 3" fill="none" stroke="#008000" stroke-width="1.300"/><path d="M6 1L8.500 3.500L5 4.500Z" fill="#008000"/></svg></div>
<div class="a " style="left:84px;top:123px;width:115px;height:20px;background:#fff;box-shadow:inset 1px 1px #808080,inset 2px 2px #404040,inset -1px -1px #fff,inset -2px -2px #d4d0c8"><div class="a" style="left:4px;top:3px;font-size:11px;line-height:14px;white-space:nowrap">&lt;NONE&gt;</div><div class="a raised" style="left:97px;top:2px;width:16px;height:16px"><svg style="left:4px;top:6px" width="7" height="4" viewBox="0 0 7 4"><path d="M0 0H7L3.500 4Z" fill="#000"/></svg></div></div>
<div class="a " style="left:46px;top:157px;width:161px;height:172px;background:#e8e4e8;border-radius:9px;box-shadow:inset 1px 1px 0 #fff,inset 2px 2px 1px #f8f8f8,inset -1px -1px 0 #a8a6a8,inset -2px -2px 1px #c0bec0,1px 1px 0 #c0c0c0"><div class="a" style="left:5px;top:5px;color:#484848;font-size:11px;line-height:13px;white-space:nowrap">Toleranz/Genauigkeit</div><svg style="left:142px;top:8px" width="9" height="5" viewBox="0 0 9 5"><path d="M0 5H9L4.500 0Z" fill="#606060"/></svg><div class="a" style="left:5px;top:19px;width:148px;height:1px;background:repeating-linear-gradient(90deg,#808080 0 1px,transparent 1px 3px)"></div></div>
<div class="a" style="left:50px;top:182px;width:30px;height:20px;font-size:9px;line-height:9px;font-weight:bold;white-space:nowrap"><span class="a" style="left:0;top:6px;letter-spacing:-.5px;transform:scaleX(.8);transform-origin:0 0">1.50</span><span class="a" style="left:13px;top:0;color:#e00000;transform:scaleX(.75);transform-origin:0 0">+.01</span><span class="a" style="left:13px;top:11px;color:#e00000;transform:scaleX(.75);transform-origin:0 0">-.01</span></div>
<div class="a " style="left:84px;top:183px;width:115px;height:19px;background:#fff;box-shadow:inset 1px 1px #808080,inset 2px 2px #404040,inset -1px -1px #fff,inset -2px -2px #d4d0c8"><div class="a" style="left:4px;top:2px;font-size:11px;line-height:14px;white-space:nowrap">Keine</div><div class="a raised" style="left:97px;top:2px;width:16px;height:15px"><svg style="left:4px;top:5px" width="7" height="4" viewBox="0 0 7 4"><path d="M0 0H7L3.500 4Z" fill="#000"/></svg></div></div>
<svg style="left:55px;top:216px" width="13" height="13" viewBox="0 0 13 13"><path d="M6.500 0V13M0 6.500H13" stroke="#e00000" stroke-width="1.800"/></svg>
<div class="a " style="left:84px;top:213px;width:116px;height:19px;background:#e8e4e8;box-shadow:inset 1px 1px #808080,inset 2px 2px #404040,inset -1px -1px #fff,inset -2px -2px #d4d0c8"><div class="a" style="left:4px;top:2px;font-size:11px;line-height:14px;color:#909090;white-space:nowrap">0.00Grad</div></div>
<svg style="left:55px;top:250px" width="13" height="3" viewBox="0 0 13 3"><path d="M0 1.500H13" stroke="#e00000" stroke-width="1.800"/></svg>
<div class="a " style="left:84px;top:242px;width:116px;height:19px;background:#e8e4e8;box-shadow:inset 1px 1px #808080,inset 2px 2px #404040,inset -1px -1px #fff,inset -2px -2px #d4d0c8"><div class="a" style="left:4px;top:2px;font-size:11px;line-height:14px;color:#909090;white-space:nowrap">0.00Grad</div></div>
<div class="a" style="left:50px;top:271px;width:30px;height:22px;font-size:8px;line-height:8px;font-weight:bold;white-space:nowrap"><span class="a" style="left:13px;top:0;transform:scaleX(.7);transform-origin:0 0">.01</span><span class="a" style="left:0;top:7px;color:#e00000;transform:scaleX(.78);transform-origin:0 0">X.XXX</span><span class="a" style="left:13px;top:14px;transform:scaleX(.7);transform-origin:0 0">.01</span></div>
<div class="a " style="left:84px;top:272px;width:118px;height:20px;background:#fff;box-shadow:inset 1px 1px #808080,inset 2px 2px #404040,inset -1px -1px #fff,inset -2px -2px #d4d0c8"><div class="a" style="left:4px;top:3px;font-size:11px;line-height:14px;white-space:nowrap">.XX(Standard)</div><div class="a raised" style="left:100px;top:2px;width:16px;height:16px"><svg style="left:4px;top:6px" width="7" height="4" viewBox="0 0 7 4"><path d="M0 0H7L3.500 4Z" fill="#000"/></svg></div></div>
<div class="a" style="left:50px;top:300px;width:30px;height:20px;font-size:9px;line-height:9px;font-weight:bold;white-space:nowrap"><span class="a" style="left:0;top:6px;letter-spacing:-.5px;transform:scaleX(.8);transform-origin:0 0">1.50</span><span class="a" style="left:13px;top:0;color:#e00000;transform:scaleX(.75);transform-origin:0 0">+.XX</span><span class="a" style="left:13px;top:11px;color:#e00000;transform:scaleX(.75);transform-origin:0 0">-.XX</span></div>
<div class="a " style="left:84px;top:301px;width:118px;height:20px;background:#fff;box-shadow:inset 1px 1px #808080,inset 2px 2px #404040,inset -1px -1px #fff,inset -2px -2px #d4d0c8"><div class="a" style="left:4px;top:3px;font-size:11px;line-height:14px;white-space:nowrap">.XX(Standard)</div><div class="a raised" style="left:100px;top:2px;width:16px;height:16px"><svg style="left:4px;top:6px" width="7" height="4" viewBox="0 0 7 4"><path d="M0 0H7L3.500 4Z" fill="#000"/></svg></div></div>
<div class="a " style="left:46px;top:335px;width:161px;height:83px;background:#e8e4e8;border-radius:9px;box-shadow:inset 1px 1px 0 #fff,inset 2px 2px 1px #f8f8f8,inset -1px -1px 0 #a8a6a8,inset -2px -2px 1px #c0bec0,1px 1px 0 #c0c0c0"><div class="a" style="left:5px;top:5px;color:#484848;font-size:11px;line-height:13px;white-space:nowrap">Pfeile</div><svg style="left:142px;top:8px" width="9" height="5" viewBox="0 0 9 5"><path d="M0 5H9L4.500 0Z" fill="#606060"/></svg><div class="a" style="left:5px;top:19px;width:148px;height:1px;background:repeating-linear-gradient(90deg,#808080 0 1px,transparent 1px 3px)"></div></div>
<div class="a " style="left:84px;top:361px;width:23px;height:21px;background:#e8e4e8;box-shadow:inset 1px 1px #fff,inset -1px -1px #404040,inset -2px -2px #808080"><svg style="left:3px;top:2px" width="17" height="17" viewBox="0 0 17 17"><path d="M3 1L13 14M7 1L17 14" stroke="#000" stroke-width="1.200"/><path d="M1 15L6 10M16 2L12 6" stroke="#e00000" stroke-width="1.200"/><path d="M6 10L3 10.500M6 10L5.500 13M12 6L15 5.500M12 6L12.500 3" stroke="#e00000"/></svg></div>
<div class="a " style="left:114px;top:361px;width:23px;height:21px;background:#e8e4e8;box-shadow:inset 1px 1px #fff,inset -1px -1px #404040,inset -2px -2px #808080"><svg style="left:3px;top:2px" width="17" height="17" viewBox="0 0 17 17"><path d="M1 8L9 15M8 1L16 8" stroke="#000" stroke-width="1.200"/><path d="M6 11L11 5" stroke="#e00000" stroke-width="1.200"/><path d="M6 11L6.500 8M6 11L9 10.500M11 5L8 5.500M11 5L10.500 8" stroke="#e00000"/></svg></div>
<div class="a " style="left:144px;top:361px;width:23px;height:21px;background:#a8a6a8;box-shadow:inset 1px 1px #404040,inset -1px -1px #fff,inset 2px 2px #808080"><svg style="left:3px;top:2px" width="17" height="17" viewBox="0 0 17 17"><path d="M3 1L13 14M7 1L17 14" stroke="#000" stroke-width="1.200"/><path d="M1 15L6 10" stroke="#e00000" stroke-width="1.200"/><path d="M12 1L13.500 5H17.500L14.300 7.500L15.500 11.500L12 9L8.500 11.500L9.700 7.500L6.500 5H10.500Z" fill="#f0e820" stroke="#806000" stroke-width=".7"/></svg></div>
<div class="a " style="left:84px;top:387px;width:116px;height:22px;background:#fff;box-shadow:inset 1px 1px #808080,inset 2px 2px #404040,inset -1px -1px #fff,inset -2px -2px #d4d0c8"><svg style="left:3px;top:3px" width="90" height="16" viewBox="0 0 90 16"><path d="M0 7.500H45M20 1L45 7.500L20 14" fill="none" stroke="#000" stroke-width="1"/><path d="M65 0H73L80 6V16H65Z" fill="#ffff00"/><path d="M73 0V6H80" fill="#fff" stroke="#808080" stroke-width=".8"/></svg><div class="a raised" style="left:98px;top:2px;width:16px;height:18px"><svg style="left:4px;top:7px" width="7" height="4" viewBox="0 0 7 4"><path d="M0 0H7L3.500 4Z" fill="#000"/></svg></div></div>
<div class="a " style="left:46px;top:423px;width:161px;height:237px;background:#e8e4e8;border-radius:9px;box-shadow:inset 1px 1px 0 #fff,inset 2px 2px 1px #f8f8f8,inset -1px -1px 0 #a8a6a8,inset -2px -2px 1px #c0bec0,1px 1px 0 #c0c0c0"><div class="a" style="left:5px;top:5px;color:#484848;font-size:11px;line-height:13px;white-space:nowrap">Bemaßungstext</div><svg style="left:142px;top:8px" width="9" height="5" viewBox="0 0 9 5"><path d="M0 5H9L4.500 0Z" fill="#606060"/></svg><div class="a" style="left:5px;top:19px;width:148px;height:1px;background:repeating-linear-gradient(90deg,#808080 0 1px,transparent 1px 3px)"></div></div>
<div class="a " style="left:51px;top:448px;width:147px;height:22px;background:#fff;box-shadow:inset 1px 1px #808080,inset 2px 2px #404040,inset -1px -1px #fff,inset -2px -2px #d4d0c8"></div>
<div class="a " style="left:51px;top:474px;width:147px;height:22px;background:#fff;box-shadow:inset 1px 1px #808080,inset 2px 2px #404040,inset -1px -1px #fff,inset -2px -2px #d4d0c8"><div class="a" style="left:4px;top:1px;font-size:8px;line-height:14px;color:#000;white-space:nowrap">&lt;DIM&gt;</div></div>
<div class="a " style="left:51px;top:504px;width:147px;height:56px;background:#fff;box-shadow:inset 1px 1px #808080,inset 2px 2px #404040,inset -1px -1px #fff,inset -2px -2px #d4d0c8"></div>
<div class="a " style="left:51px;top:572px;width:23px;height:21px;background:#e8e4e8;box-shadow:inset 1px 1px #fff,inset -1px -1px #404040,inset -2px -2px #808080"><svg style="left:4px;top:3px" width="16" height="16" viewBox="0 0 16 16"><rect x="1" y="1" width="14" height="2" fill="#000"/><rect x="1" y="4" width="8" height="2" fill="#000"/><rect x="1" y="7" width="14" height="2" fill="#000"/><rect x="1" y="10" width="8" height="2" fill="#000"/><rect x="1" y="13" width="14" height="2" fill="#000"/></svg></div>
<div class="a " style="left:83px;top:572px;width:24px;height:21px;background:#a8a6a8;box-shadow:inset 1px 1px #404040,inset -1px -1px #fff,inset 2px 2px #808080"><svg style="left:4px;top:3px" width="16" height="16" viewBox="0 0 16 16"><rect x="1.0" y="1" width="14" height="2" fill="#000"/><rect x="4.0" y="4" width="8" height="2" fill="#000"/><rect x="1.0" y="7" width="14" height="2" fill="#000"/><rect x="4.0" y="10" width="8" height="2" fill="#000"/><rect x="1.0" y="13" width="14" height="2" fill="#000"/></svg></div>
<div class="a " style="left:113px;top:572px;width:23px;height:21px;background:#e8e4e8;box-shadow:inset 1px 1px #fff,inset -1px -1px #404040,inset -2px -2px #808080"><svg style="left:4px;top:3px" width="16" height="16" viewBox="0 0 16 16"><rect x="1" y="1" width="14" height="2" fill="#000"/><rect x="7" y="4" width="8" height="2" fill="#000"/><rect x="1" y="7" width="14" height="2" fill="#000"/><rect x="7" y="10" width="8" height="2" fill="#000"/><rect x="1" y="13" width="14" height="2" fill="#000"/></svg></div>
<div class="a " style="left:51px;top:605px;width:23px;height:21px;background:#e8e4e8;box-shadow:inset 1px 1px #fff,inset -1px -1px #404040,inset -2px -2px #808080"><svg style="left:4px;top:3px" width="15" height="16" viewBox="0 0 15 16"><ellipse cx="7.500" cy="8" rx="4.500" ry="5.500" fill="none" stroke="#303030" stroke-width="1.300"/><path d="M3 15L12 1" stroke="#303030" stroke-width="1.200"/></svg></div>
<div class="a " style="left:78px;top:605px;width:22px;height:21px;background:#e8e4e8;box-shadow:inset 1px 1px #fff,inset -1px -1px #404040,inset -2px -2px #808080"><svg style="left:9px;top:4px" width="8" height="8" viewBox="0 0 8 8"><circle cx="4" cy="4" r="2.600" fill="none" stroke="#303030" stroke-width="1.200"/></svg></div>
<div class="a " style="left:102px;top:605px;width:22px;height:21px;background:#e8e4e8;box-shadow:inset 1px 1px #fff,inset -1px -1px #404040,inset -2px -2px #808080"><svg style="left:6px;top:4px" width="11" height="14" viewBox="0 0 11 14"><path d="M5.500 1V9M1.500 5H9.500M1.500 12H9.500" stroke="#303030" stroke-width="1.300"/></svg></div>
<div class="a " style="left:126px;top:605px;width:22px;height:21px;background:#e8e4e8;box-shadow:inset 1px 1px #fff,inset -1px -1px #404040,inset -2px -2px #808080"><svg style="left:5px;top:3px" width="13" height="16" viewBox="0 0 13 16"><path d="M10 4A4.500 5 0 1 0 10 12" fill="none" stroke="#303030" stroke-width="1.300"/><path d="M6 0V16M6 13H11" stroke="#303030" stroke-width="1.200"/></svg></div>
<div class="a " style="left:150px;top:605px;width:22px;height:21px;background:#e8e4e8;box-shadow:inset 1px 1px #fff,inset -1px -1px #404040,inset -2px -2px #808080"><svg style="left:6px;top:6px" width="10" height="10" viewBox="0 0 10 10"><rect x="1" y="1" width="7" height="7" fill="none" stroke="#303030" stroke-width="1.400"/></svg></div>
<div class="a " style="left:174px;top:605px;width:22px;height:21px;background:#e8e4e8;box-shadow:inset 1px 1px #fff,inset -1px -1px #404040,inset -2px -2px #808080"><svg style="left:4px;top:6px" width="14" height="9" viewBox="0 0 14 9"><path d="M1 1L7 8L13 1" fill="none" stroke="#303030" stroke-width="1.300"/></svg></div>
<div class="a " style="left:51px;top:631px;width:23px;height:21px;background:#e8e4e8;box-shadow:inset 1px 1px #fff,inset -1px -1px #404040,inset -2px -2px #808080"><svg style="left:5px;top:6px" width="13" height="10" viewBox="0 0 13 10"><path d="M1 0V8H12V0" fill="none" stroke="#303030" stroke-width="1.500"/></svg></div>
<div class="a " style="left:78px;top:631px;width:22px;height:21px;background:#e8e4e8;box-shadow:inset 1px 1px #fff,inset -1px -1px #404040,inset -2px -2px #808080"><svg style="left:5px;top:3px" width="12" height="15" viewBox="0 0 12 15"><path d="M0 2H12M6 2V13M2 9L6 13L10 9" fill="none" stroke="#303030" stroke-width="1.400"/></svg></div>
<div class="a " style="left:102px;top:631px;width:47px;height:21px;background:#e8e4e8;box-shadow:inset 1px 1px #fff,inset -1px -1px #404040,inset -2px -2px #808080"><div class="a" style="left:0;top:4px;width:100%;text-align:center;color:#808080;font-size:11px;line-height:13px">Weiter...</div></div>
<div class="a " style="left:68px;top:687px;width:125px;height:22px;background:#e8e4e8;box-shadow:inset 1px 1px #fff,inset -1px -1px #404040,inset -2px -2px #808080"><div class="a" style="left:0;top:4px;width:100%;text-align:center;color:#484848;font-size:11px;line-height:13px;white-space:nowrap">Weitere Eigenschaften...</div></div>
<div class="a" id="tabline" style="left:2px;top:876px;width:114px;height:1px;background:#404040"></div>
<div class="a " style="left:2px;top:877px;width:28px;height:21px;background:#d4d0c8;border:1px solid;border-color:#fff #404040 #404040 #fff;border-top:none;border-radius:0 0 3px 3px;box-shadow:inset -1px -1px #808080"><svg style="left:5px;top:2px" width="18" height="18" viewBox="0 0 18 18"><path d="M1.100 3.800L5.800 1.500L8.500 2.800L8.500 9L12 12.500L12 16.500L10.500 16.800L1.100 6.500Z" fill="#ffff40" stroke="#000"/><path d="M3.300 3.400L6.300 2L6.300 6.500L5 6.500Z" fill="#808000"/><path d="M9 2.800L12.600 1.300L16.200 3.200L12.600 5.200Z" fill="#00f000" stroke="#000"/><path d="M9 2.800L12.600 5.200L12.300 11L8.800 10Z" fill="#008000" stroke="#000"/><path d="M12.600 5.200L16.200 3.200L16.200 11L12.300 11Z" fill="#80e080" stroke="#000"/><path d="M12.300 11.500L16.200 11L16.200 15.300L12 16.500Z" fill="#ffff80" stroke="#000"/></svg></div>
<div class="a " style="left:30px;top:876px;width:29px;height:24px;background:#d4d0c8;border:1px solid;border-color:#fff #404040 #404040 #fff;border-top:none;border-radius:0 0 3px 3px;box-shadow:inset -1px -1px #808080"><svg style="left:5px;top:4px" width="18" height="16" viewBox="0 0 18 16"><rect x="1.500" y="5.500" width="11" height="10" fill="#fff" stroke="#000"/><path d="M3 8H11M3 10.500H11M3 13H11" stroke="#000" stroke-width=".8"/><path d="M8 7L12 2H16V6L11 9Z" fill="#d4d0c8" stroke="#000" stroke-width=".8"/><path d="M13 1L17 4L14 5Z" fill="#0000a0"/></svg></div>
<div class="a " style="left:59px;top:877px;width:28px;height:21px;background:#d4d0c8;border:1px solid;border-color:#fff #404040 #404040 #fff;border-top:none;border-radius:0 0 3px 3px;box-shadow:inset -1px -1px #808080"><svg style="left:5px;top:2px" width="18" height="18" viewBox="0 0 18 18"><rect x="1.500" y="1.500" width="6" height="6" fill="#f0e820" stroke="#000"/><rect x="6.500" y="6.500" width="6" height="6" fill="#f0e820" stroke="#000"/><rect x="11.500" y="11.500" width="6" height="6" fill="#f0e820" stroke="#000"/><path d="M4 8V15H11M10 4H15V11" fill="none" stroke="#000"/></svg></div>
<div class="a " style="left:87px;top:877px;width:28px;height:21px;background:#d4d0c8;border:1px solid;border-color:#fff #404040 #404040 #fff;border-top:none;border-radius:0 0 3px 3px;box-shadow:inset -1px -1px #808080"><svg style="left:6px;top:2px" width="16" height="18" viewBox="0 0 16 18"><path d="M3 1H13L15 4L13 7H3L1 4Z" fill="#f0e060" stroke="#806000"/><rect x="4.500" y="7" width="7" height="10" fill="#f0e060" stroke="#806000"/><path d="M4.500 10H11.500M4.500 13H11.500" stroke="#806000"/></svg></div>
</div>
<div id="split" class="a" style="left:283px;top:72px;width:1px;height:880px;background:#808080"></div><div class="a" style="left:288px;top:70px;width:1px;height:908px;background:#fff"></div>
<!-- VIEWPORT -->
<div id="view" class="a" style="left:289px;top:68px;width:962px;height:910px">
<div class="a" style="left:0;top:0;width:962px;height:910px;box-shadow:inset 1px 1px #808080,inset 2px 2px #404040,inset -1px -1px #fff"></div>
<div id="canvas" class="a" style="left:2px;top:2px;width:942px;height:891px;background:#fff;overflow:hidden">
<svg style="left:0;top:0" width="942" height="891" viewBox="291 70 942 891">
<defs>
<linearGradient id="gT" x1="0" y1="1" x2="1" y2="0"><stop offset="0" stop-color="#007880"/><stop offset=".45" stop-color="#00a0b0"/><stop offset=".72" stop-color="#b8ffff"/><stop offset=".85" stop-color="#30d0e0"/><stop offset="1" stop-color="#00a0a8"/></linearGradient>
<linearGradient id="gP" x1="0" y1="1" x2="1" y2="0"><stop offset="0" stop-color="#383080"/><stop offset=".45" stop-color="#5048a0"/><stop offset=".72" stop-color="#f0f0ff"/><stop offset=".85" stop-color="#8880d8"/><stop offset="1" stop-color="#5850a8"/></linearGradient>
<linearGradient id="gH" x1="0" y1="0" x2="1" y2="0"><stop offset="0" stop-color="#f8dc94"/><stop offset=".5" stop-color="#deb468"/><stop offset="1" stop-color="#8c6820"/></linearGradient>
<linearGradient id="gB" x1="0" y1="0" x2="1" y2="0"><stop offset="0" stop-color="#deb468"/><stop offset=".35" stop-color="#fce8a8"/><stop offset="1" stop-color="#c89c48"/></linearGradient>
<linearGradient id="gR" x1="0" y1="0" x2="1" y2="0"><stop offset="0" stop-color="#f8dc94"/><stop offset=".6" stop-color="#e8c070"/><stop offset="1" stop-color="#a07828"/></linearGradient>
<linearGradient id="gC" x1="0" y1="0" x2="1" y2=".6"><stop offset="0" stop-color="#6c5010"/><stop offset=".35" stop-color="#a88434"/><stop offset=".75" stop-color="#e4bc70"/><stop offset="1" stop-color="#f0cc84"/></linearGradient>
<linearGradient id="gY" x1="0" y1="0" x2="0" y2="1"><stop offset="0" stop-color="#d8ffff"/><stop offset=".35" stop-color="#60e8f4"/><stop offset=".55" stop-color="#10c4d4"/><stop offset="1" stop-color="#00a8b4"/></linearGradient>
</defs>
<path d="M286 239.8 L995 258 L1132 803 L426 785Z" fill="#deb468" stroke="#000" stroke-width="1.2" stroke-linejoin="round" />
<path d="M270 170 L286 239.8 L426 785 L375 849.5 L270 450Z" fill="#be9848" stroke="#000" stroke-width="1.2" stroke-linejoin="round" />
<path d="M426 785 L1132 803 L1082 869 L375 849.5Z" fill="#6e4e12" stroke="#000" stroke-width="1.2" stroke-linejoin="round" />
<path d="M497 238 L439 312 L516 611 L574 539Z" fill="#a85400" stroke="#000" stroke-width="1.2" stroke-linejoin="round" />
<path d="M527.5 356 L558 466 L577 528 L574 539 L540 470Z" fill="#a85400" stroke="none" stroke-width="1.2" stroke-linejoin="round" />
<path d="M574 539 L1011 550 L955 622 L516 611Z" fill="#703800" stroke="#000" stroke-width="1.2" stroke-linejoin="round" />
<path d="M757.5 616.3L814 545" fill="none" stroke="#000" stroke-width="1.2" stroke-linejoin="round" />
<path d="M1011 550 L1014 537 L1014 531 L1013 545Z" fill="#a85400" stroke="#000" stroke-width="1.2" stroke-linejoin="round" />
<path d="M527 350 L772 356 L790 421 L557 466 L545 420Z" fill="#a85400" stroke="#000" stroke-width="1.2" stroke-linejoin="round" />
<path d="M529.5 362 L630 364 L629 372.5 L531.5 370.5Z" fill="#b05c08" stroke="none" stroke-width="1.2" stroke-linejoin="round" />
<path d="M529.5 362L630 364M531.5 370.5L629 372.5" fill="none" stroke="#000" stroke-width="1.1" stroke-linejoin="round" />
<path d="M722 361 L769 362 L779 418 L723 418Z" fill="#a85400" stroke="#000" stroke-width="1.2" stroke-linejoin="round" />
<path d="M767 374 L771 362 L780 418 L763 409Z" fill="#c46c14" stroke="#000" stroke-width="1.2" stroke-linejoin="round" />
<path d="M722 367.5L768 368.5M724 374L767 374M767 374L763 409M723 409L763 409M723 414L778 416" fill="none" stroke="#000" stroke-width="1" stroke-linejoin="round" />
<path d="M497 238 L503 237 L745 243.8 L771.5 356 L528.5 350.5Z" fill="#00a0a8" stroke="#000" stroke-width="1.2" stroke-linejoin="round" />
<path d="M497 238 L503 237 L530.5 350.5 L527.5 356Z" fill="#008890" stroke="#000" stroke-width="1.2" stroke-linejoin="round" />
<path d="M528.5 350.5 L771.5 356 L772.5 361.5 L527.5 356Z" fill="#18b4bc" stroke="#000" stroke-width="1.2" stroke-linejoin="round" />
<path d="M503 237L530.5 350.5L771 355.5" fill="none" stroke="#000" stroke-width="1.2" stroke-linejoin="round" />
<path d="M627.5 352L627.5 292C628 270 645 257.500 668 258C690 259 706 270 716 288C724 302 728 320 730 354Z" fill="#008890" stroke="#000" stroke-width="1.2" stroke-linejoin="round" />
<path d="M745 243.8 L830 246 L800 300 L830 380 L815 531 L788.5 421Z" fill="#5850a8" stroke="#000" stroke-width="1.2" stroke-linejoin="round" />
<path d="M745 243.8 L941 249 L1014 531 L815 531Z" fill="#5850a8" stroke="#000" stroke-width="1.2" stroke-linejoin="round" />
<path d="M815 531 L1014 531 L1013.5 537.5 L814.5 537.5Z" fill="#7068c0" stroke="#000" stroke-width="1.2" stroke-linejoin="round" />
<path d="M557.5 466 L640 481 L660 487.5 L690 481 L714 465 L728 443 L731 420 L788.5 421 L815 531 L576 527.5Z" fill="#00a0a8" stroke="#000" stroke-width="1.2" stroke-linejoin="round" />
<path d="M557.5 466 L563.5 468.5 L580 524 L576 527.5Z" fill="#18b4bc" stroke="#000" stroke-width="1.2" stroke-linejoin="round" />
<path d="M576 527.5 L815 531 L814.5 537.5 L574.5 533.5Z" fill="#18b4bc" stroke="#000" stroke-width="1.2" stroke-linejoin="round" />
<path d="M563.5 468.500L580 524L814 528" fill="none" stroke="#000" stroke-width="1.2" stroke-linejoin="round" />
<path d="M574.5 533.5 L1013.5 537.5 L1011 550 L574 539Z" fill="#a85400" stroke="#000" stroke-width="1.2" stroke-linejoin="round" />
<path d="M574.500 533.5L814.500 537.5L1013.5 537.5M574 539L1011 550" fill="none" stroke="#000" stroke-width="1.2" stroke-linejoin="round" />
<path d="M745 243.8L788.5 421L815 531M750 258L790 418" fill="none" stroke="#000" stroke-width="1.2" stroke-linejoin="round" />
<linearGradient id="h1" gradientUnits="userSpaceOnUse" x1="538.6" y1="318.7" x2="563.4" y2="350.1" gradientTransform="rotate(-35 554.2 327.5)"><stop offset="0" stop-color="#0a8a96"/><stop offset="0.34" stop-color="#2ca6b6"/><stop offset="0.5" stop-color="#9ceef6"/><stop offset="0.57" stop-color="#e4ffff"/><stop offset="0.65" stop-color="#6cdce6"/><stop offset="0.8" stop-color="#28b0bc"/><stop offset="1" stop-color="#10a0a8"/></linearGradient>
<ellipse cx="554.2" cy="327.5" rx="19.5" ry="16" fill="url(#h1)" stroke="#000" stroke-width="1.1" transform="rotate(35 554.2 327.5)"/>
<ellipse cx="550" cy="333.4" rx="10.2" ry="9.4" fill="#201000" stroke="#000" stroke-width=".8" transform="rotate(35 550 333.4)"/>
<ellipse cx="550" cy="333.4" rx="8.8" ry="8.0" fill="none" stroke="#c09060" stroke-width=".7" stroke-dasharray="1 1.5" transform="rotate(35 550 333.4)"/>
<ellipse cx="549.7" cy="333.9" rx="7.2" ry="6.5" fill="#c86c10" transform="rotate(35 550 333.4)"/>
<linearGradient id="h2" gradientUnits="userSpaceOnUse" x1="704.6" y1="254.8" x2="729.4" y2="286.2" gradientTransform="rotate(-35 720 260)"><stop offset="0" stop-color="#0a8a96"/><stop offset="0.34" stop-color="#2ca6b6"/><stop offset="0.5" stop-color="#9ceef6"/><stop offset="0.57" stop-color="#e4ffff"/><stop offset="0.65" stop-color="#6cdce6"/><stop offset="0.8" stop-color="#28b0bc"/><stop offset="1" stop-color="#10a0a8"/></linearGradient>
<ellipse cx="720" cy="260" rx="18.5" ry="15" fill="url(#h2)" stroke="#000" stroke-width="1.1" transform="rotate(35 720 260)"/>
<ellipse cx="716" cy="269.5" rx="10.2" ry="9.4" fill="#201000" stroke="#000" stroke-width=".8" transform="rotate(35 716 269.5)"/>
<ellipse cx="716" cy="269.5" rx="8.8" ry="8.0" fill="none" stroke="#c09060" stroke-width=".7" stroke-dasharray="1 1.5" transform="rotate(35 716 269.5)"/>
<ellipse cx="715.7" cy="270.0" rx="7.2" ry="6.5" fill="#c86c10" transform="rotate(35 716 269.5)"/>
<linearGradient id="h3" gradientUnits="userSpaceOnUse" x1="756.1" y1="256.3" x2="780.9" y2="287.7" gradientTransform="rotate(-35 771.25 265.4)"><stop offset="0" stop-color="#403890"/><stop offset="0.34" stop-color="#5e56b0"/><stop offset="0.5" stop-color="#c4c4f6"/><stop offset="0.57" stop-color="#ffffff"/><stop offset="0.65" stop-color="#a8a0e8"/><stop offset="0.8" stop-color="#6860b8"/><stop offset="1" stop-color="#5850a8"/></linearGradient>
<ellipse cx="771.25" cy="265.4" rx="19.5" ry="16" fill="url(#h3)" stroke="#000" stroke-width="1.1" transform="rotate(35 771.25 265.4)"/>
<ellipse cx="767.5" cy="271" rx="10.2" ry="9.4" fill="#201000" stroke="#000" stroke-width=".8" transform="rotate(35 767.5 271)"/>
<ellipse cx="767.5" cy="271" rx="8.8" ry="8.0" fill="none" stroke="#c09060" stroke-width=".7" stroke-dasharray="1 1.5" transform="rotate(35 767.5 271)"/>
<ellipse cx="767.2" cy="271.5" rx="7.2" ry="6.5" fill="#c86c10" transform="rotate(35 767.5 271)"/>
<linearGradient id="h4" gradientUnits="userSpaceOnUse" x1="920.6" y1="335.3" x2="945.4" y2="366.7" gradientTransform="rotate(-35 935 344)"><stop offset="0" stop-color="#403890"/><stop offset="0.34" stop-color="#5e56b0"/><stop offset="0.5" stop-color="#c4c4f6"/><stop offset="0.57" stop-color="#ffffff"/><stop offset="0.65" stop-color="#a8a0e8"/><stop offset="0.8" stop-color="#6860b8"/><stop offset="1" stop-color="#5850a8"/></linearGradient>
<ellipse cx="935" cy="344" rx="20" ry="16.5" fill="url(#h4)" stroke="#000" stroke-width="1.1" transform="rotate(35 935 344)"/>
<ellipse cx="932" cy="350" rx="10.2" ry="9.4" fill="#201000" stroke="#000" stroke-width=".8" transform="rotate(35 932 350)"/>
<ellipse cx="932" cy="350" rx="8.8" ry="8.0" fill="none" stroke="#c09060" stroke-width=".7" stroke-dasharray="1 1.5" transform="rotate(35 932 350)"/>
<ellipse cx="931.7" cy="350.5" rx="7.2" ry="6.5" fill="#c86c10" transform="rotate(35 932 350)"/>
<linearGradient id="h5" gradientUnits="userSpaceOnUse" x1="584.1" y1="496.3" x2="608.9" y2="527.7" gradientTransform="rotate(-35 600 505)"><stop offset="0" stop-color="#0a8a96"/><stop offset="0.34" stop-color="#2ca6b6"/><stop offset="0.5" stop-color="#9ceef6"/><stop offset="0.57" stop-color="#e4ffff"/><stop offset="0.65" stop-color="#6cdce6"/><stop offset="0.8" stop-color="#28b0bc"/><stop offset="1" stop-color="#10a0a8"/></linearGradient>
<ellipse cx="600" cy="505" rx="19" ry="16.5" fill="url(#h5)" stroke="#000" stroke-width="1.1" transform="rotate(35 600 505)"/>
<ellipse cx="595.5" cy="511" rx="10.2" ry="9.4" fill="#201000" stroke="#000" stroke-width=".8" transform="rotate(35 595.5 511)"/>
<ellipse cx="595.5" cy="511" rx="8.8" ry="8.0" fill="none" stroke="#c09060" stroke-width=".7" stroke-dasharray="1 1.5" transform="rotate(35 595.5 511)"/>
<ellipse cx="595.2" cy="511.5" rx="7.2" ry="6.5" fill="#c86c10" transform="rotate(35 595.5 511)"/>
<linearGradient id="h6" gradientUnits="userSpaceOnUse" x1="756.2" y1="437.8" x2="781.0" y2="469.2" gradientTransform="rotate(-35 772.3 447)"><stop offset="0" stop-color="#0a8a96"/><stop offset="0.34" stop-color="#2ca6b6"/><stop offset="0.5" stop-color="#9ceef6"/><stop offset="0.57" stop-color="#e4ffff"/><stop offset="0.65" stop-color="#6cdce6"/><stop offset="0.8" stop-color="#28b0bc"/><stop offset="1" stop-color="#10a0a8"/></linearGradient>
<ellipse cx="772.3" cy="447" rx="18.5" ry="16.5" fill="url(#h6)" stroke="#000" stroke-width="1.1" transform="rotate(35 772.3 447)"/>
<ellipse cx="767.6" cy="452.5" rx="10.2" ry="9.4" fill="#201000" stroke="#000" stroke-width=".8" transform="rotate(35 767.6 452.5)"/>
<ellipse cx="767.6" cy="452.5" rx="8.8" ry="8.0" fill="none" stroke="#c09060" stroke-width=".7" stroke-dasharray="1 1.5" transform="rotate(35 767.6 452.5)"/>
<ellipse cx="767.3000000000001" cy="453.0" rx="7.2" ry="6.5" fill="#c86c10" transform="rotate(35 767.6 452.5)"/>
<linearGradient id="h7" gradientUnits="userSpaceOnUse" x1="817.6" y1="501.3" x2="842.4" y2="532.7" gradientTransform="rotate(-35 833.75 511)"><stop offset="0" stop-color="#403890"/><stop offset="0.34" stop-color="#5e56b0"/><stop offset="0.5" stop-color="#c4c4f6"/><stop offset="0.57" stop-color="#ffffff"/><stop offset="0.65" stop-color="#a8a0e8"/><stop offset="0.8" stop-color="#6860b8"/><stop offset="1" stop-color="#5850a8"/></linearGradient>
<ellipse cx="833.75" cy="511" rx="19.5" ry="16" fill="url(#h7)" stroke="#000" stroke-width="1.1" transform="rotate(35 833.75 511)"/>
<ellipse cx="829" cy="516" rx="10.2" ry="9.4" fill="#201000" stroke="#000" stroke-width=".8" transform="rotate(35 829 516)"/>
<ellipse cx="829" cy="516" rx="8.8" ry="8.0" fill="none" stroke="#c09060" stroke-width=".7" stroke-dasharray="1 1.5" transform="rotate(35 829 516)"/>
<ellipse cx="828.7" cy="516.5" rx="7.2" ry="6.5" fill="#c86c10" transform="rotate(35 829 516)"/>
<linearGradient id="h8" gradientUnits="userSpaceOnUse" x1="964.6" y1="505.8" x2="989.4" y2="537.2" gradientTransform="rotate(-35 980 515)"><stop offset="0" stop-color="#403890"/><stop offset="0.34" stop-color="#5e56b0"/><stop offset="0.5" stop-color="#c4c4f6"/><stop offset="0.57" stop-color="#ffffff"/><stop offset="0.65" stop-color="#a8a0e8"/><stop offset="0.8" stop-color="#6860b8"/><stop offset="1" stop-color="#5850a8"/></linearGradient>
<ellipse cx="980" cy="515" rx="19.5" ry="16" fill="url(#h8)" stroke="#000" stroke-width="1.1" transform="rotate(35 980 515)"/>
<ellipse cx="976" cy="520.5" rx="10.2" ry="9.4" fill="#201000" stroke="#000" stroke-width=".8" transform="rotate(35 976 520.5)"/>
<ellipse cx="976" cy="520.5" rx="8.8" ry="8.0" fill="none" stroke="#c09060" stroke-width=".7" stroke-dasharray="1 1.5" transform="rotate(35 976 520.5)"/>
<ellipse cx="975.7" cy="521.0" rx="7.2" ry="6.5" fill="#c86c10" transform="rotate(35 976 520.5)"/>
<path d="M415.75 358 L382.5 398.75 L388.75 557.5 L420 517.5Z" fill="#ba9246" stroke="#000" stroke-width="1.2" stroke-linejoin="round" />
<path d="M415.75 358 L458.75 367.5 L462.5 527.5 L420 517.5Z" fill="#deb468" stroke="#000" stroke-width="1.2" stroke-linejoin="round" />
<path d="M458.75 367.5 L475 390 L480 547.5 L462.5 527.5Z" fill="#80601c" stroke="#000" stroke-width="1.2" stroke-linejoin="round" />
<path d="M420 517.5 L462.5 527.5 L480 547.5 L462.5 572.5 L388.75 557.5Z" fill="#8c6c28" stroke="#000" stroke-width="1.2" stroke-linejoin="round" />
<clipPath id="cb0"><ellipse cx="439" cy="389" rx="22" ry="19" transform="rotate(40 439 389)"/></clipPath>
<linearGradient id="gc0" gradientUnits="userSpaceOnUse" x1="421" y1="372" x2="459" y2="397"><stop offset="0" stop-color="#6a4e10"/><stop offset=".3" stop-color="#94742a"/><stop offset=".65" stop-color="#c8a054"/><stop offset="1" stop-color="#e0b86c"/></linearGradient>
<linearGradient id="gd0" gradientUnits="userSpaceOnUse" x1="421" y1="392" x2="442" y2="408"><stop offset="0" stop-color="#7c5c18"/><stop offset=".5" stop-color="#b08838"/><stop offset="1" stop-color="#d8b064"/></linearGradient>
<g transform="translate(0 0)"><g clip-path="url(#cb0)"><rect x="410" y="360" width="60" height="60" fill="url(#gc0)"/><path d="M418.500 384.500C427 382 440 385 446.500 395C449 399 450 404 450.500 410L450 425L405 425L405 384Z" fill="#ecc67c" stroke="#000" stroke-width="1.200"/><path d="M420.500 393C427 391 434 393.500 438 399C440 402 441 405 441.500 410L441 425L405 425L405 393Z" fill="url(#gd0)" stroke="#000" stroke-width="1.200"/></g><ellipse cx="439" cy="389" rx="22" ry="19" transform="rotate(40 439 389)" fill="none" stroke="#000" stroke-width="1.200"/></g>
<clipPath id="cb1"><ellipse cx="442.5" cy="494.5" rx="22" ry="19" transform="rotate(40 442.5 494.5)"/></clipPath>
<linearGradient id="gc1" gradientUnits="userSpaceOnUse" x1="424.5" y1="477.5" x2="462.5" y2="502.5"><stop offset="0" stop-color="#6a4e10"/><stop offset=".3" stop-color="#94742a"/><stop offset=".65" stop-color="#c8a054"/><stop offset="1" stop-color="#e0b86c"/></linearGradient>
<linearGradient id="gd1" gradientUnits="userSpaceOnUse" x1="424.5" y1="497.5" x2="445.5" y2="513.5"><stop offset="0" stop-color="#7c5c18"/><stop offset=".5" stop-color="#b08838"/><stop offset="1" stop-color="#d8b064"/></linearGradient>
<g transform="translate(3.5 105.5)"><g clip-path="url(#cb0)"><rect x="410" y="360" width="60" height="60" fill="url(#gc0)"/><path d="M418.500 384.500C427 382 440 385 446.500 395C449 399 450 404 450.500 410L450 425L405 425L405 384Z" fill="#ecc67c" stroke="#000" stroke-width="1.200"/><path d="M420.500 393C427 391 434 393.500 438 399C440 402 441 405 441.500 410L441 425L405 425L405 393Z" fill="url(#gd0)" stroke="#000" stroke-width="1.200"/></g><ellipse cx="439" cy="389" rx="22" ry="19" transform="rotate(40 439 389)" fill="none" stroke="#000" stroke-width="1.200"/></g>
<path d="M690 285C680 292 673 305 674 318C675 330 684 339 698 341.5L713 336L730 341L728 315C726 300 720 290 710 283.5Z" fill="#a85400" stroke="none" stroke-width="1.2" stroke-linejoin="round" />
<path d="M690 300C700 303 708 310 712 322M692 310C700 314 708 322 712 334" fill="none" stroke="#703800" stroke-width="5" stroke-linejoin="round" stroke-linecap="butt" opacity=".8"/>
<path d="M706 286L712 283.500C717 287 721 292 722.5 296C725 302 727 309 727.5 315L730 340L731 355L724 355L718.75 335L717.5 317.5C716.500 312 715 307 713.75 302.5C712 296 709 290 706 286Z" fill="url(#gY)" stroke="#000" stroke-width="0.9" stroke-linejoin="round" />
<path d="M717.5 317.5L727.5 315" fill="none" stroke="#000" stroke-width="0.8" stroke-linejoin="round" />
<path d="M688 291L692 288.500L700 288L709 296L706 300L697 297.500Z" fill="#d8b064" stroke="#000" stroke-width="0.8" stroke-linejoin="round" />
<path d="M694 288.500L697 297M701 289L703 298.500" fill="none" stroke="#000" stroke-width="0.6" stroke-linejoin="round" />
<path d="M631.500 392C629 394 627.500 396 628 398.500L634 399L637 397L639 368L660 300L685 270C668 265.500 653 267 647.5 270C640 270.5 632 277 631.500 290Z" fill="#deb468" stroke="#000" stroke-width="1.2" stroke-linejoin="round" />
<path d="M635 296L635 392C634 395 632 397 630 398.500" fill="none" stroke="#000" stroke-width="0.9" stroke-linejoin="round" />
<path d="M631.500 388C629 392 627.500 396 628 398.500L634 399C634.500 396 635 392 635 388Z" fill="#f8dc94" stroke="#000" stroke-width="0.8" stroke-linejoin="round" />
<path d="M647.5 294C649 286 656 281 666 280L671 281.5L654 314L650.5 315C648 309 647 301 647.5 294Z" fill="#a85400" stroke="#000" stroke-width="1.2" stroke-linejoin="round" />
<path d="M635 368C639.2 356.7 653.8 314.5 660 300C666.2 285.5 667.9 286.0 672.5 281C677.1 276.0 682.1 272.7 687.5 270C692.9 267.3 699.2 264.8 705 265C710.8 265.2 717.5 268.5 722.5 271C727.5 273.5 731.5 276.2 735 280C738.5 283.8 742.8 290.4 743.75 293.75C744.8 297.1 742.9 299.0 741 300C739.1 301.0 734.8 300.8 732.5 300C730.2 299.2 729.6 297.1 727.5 295C725.4 292.9 722.9 289.4 720 287.5C717.1 285.6 713.8 284.2 710 283.75C706.2 283.3 701.2 284.0 697.5 285C693.8 286.0 690.8 287.1 687.5 290C684.2 292.9 679.8 297.9 677.5 302.5C675.2 307.1 673.8 312.9 673.75 317.5C673.8 322.1 675.2 326.5 677.5 330C679.8 333.5 683.8 336.9 687.5 338.75C691.2 340.6 695.8 341.6 700 341C704.2 340.4 707.5 335.2 712.5 335C717.5 334.8 726.6 338.5 730 340C733.4 341.5 732.5 343.1 733 343.75L721.5 371L721.5 410L636 400Z" fill="#deb468" stroke="#000" stroke-width="1.2" stroke-linejoin="round" />
<path d="M637 368L721.5 371L721.5 409L636 399Z" fill="#e6bc70" stroke="none" stroke-width="1.2" stroke-linejoin="round" />
<path d="M721.5 371L721.5 408" fill="none" stroke="#000" stroke-width="1.2" stroke-linejoin="round" />
<path d="M639 368C643.1 356.7 657.6 314.2 663.75 300C669.9 285.8 671.6 287.2 676 282.5C680.4 277.8 685.2 274.4 690 272C694.8 269.6 702.5 268.7 705 268" fill="none" stroke="#000" stroke-width="1.2" stroke-linejoin="round" />
<path d="M683 286L688 292M700 283L702 289" fill="none" stroke="#000" stroke-width="0.8" stroke-linejoin="round" />
<circle cx="716" cy="270.500" r="8.500" fill="none" stroke="#302000" stroke-width=".7"/>
<path d="M684 337C692 340 698 336 706 331L716 336L730 341L733 344L714 344L700 349C692 349 688 345 684 337Z" fill="#f8dc94" stroke="#000" stroke-width="0.9" stroke-linejoin="round" />
<path d="M537.5 380.6 L624 398 L636 400 L721.5 407 L721.5 412 L548 409 L536 403Z" fill="#deb468" stroke="#000" stroke-width="1.2" stroke-linejoin="round" />
<path d="M536 402.5 L636 404 L721.5 406.5 L721.5 411 L640 410.5 L550 408.75Z" fill="#a88434" stroke="none" stroke-width="1.2" stroke-linejoin="round" />
<path d="M550 408.75L640 410.5L714 410C720 409.500 722.5 408 721.5 407L722.5 416C722 419 720 421 714 421.5L640 423.75L545 418Z" fill="url(#gB)" stroke="#000" stroke-width="1.2" stroke-linejoin="round" />
<path d="M636 410.5L635 423.5" fill="none" stroke="#000" stroke-width="0.8" stroke-linejoin="round" />
<path d="M540 420L545 418L640 423.75L714 421.5L721.5 421C721.5 430 721 436 720 440C717 450 713 457 707.5 462C701 469 694 474 685.6 477.5C677 481 668 483 659 483.75C651 484 643 483 635.6 480.6L538.75 458.75Z" fill="#deb468" stroke="#000" stroke-width="1.2" stroke-linejoin="round" />
<path d="M538.75 458.75L635.6 480.6C643 483 651 484 659 483.75C677 482 697 474 707.5 462L711 465C700 477 680 486 659 487.5C651 488 643 486 636 484.5L556 466L538.75 463Z" fill="#b48c3c" stroke="#000" stroke-width="0.8" stroke-linejoin="round" />
<path d="M514 409 L522 400 L537 403 L546 409 L540 420 L538.75 458.75 L530 480 L524 462 L516 424Z" fill="#b48c3c" stroke="none" stroke-width="1.2" stroke-linejoin="round" />
<path d="M511 386C515 382 520 379.500 525 379.4L536 380.6L537.5 400L533 402C524 404 516 410 514 420Z" fill="url(#gB)" stroke="#000" stroke-width="1.2" stroke-linejoin="round" />
<path d="M546 409C538 410 531 416 530 426L538.75 428C539 422 541 419 545 418Z" fill="#f8dc94" stroke="#000" stroke-width="1.2" stroke-linejoin="round" />
<path d="M536 403C526 405 517 413 515.500 424L530 426C531 416 538 410 546 409Z" fill="#b48c3c" stroke="#000" stroke-width="0.8" stroke-linejoin="round" />
<path d="M530 426 L538.75 428 L538.75 470 L535 482.5 L529 482Z" fill="#f8dc94" stroke="#000" stroke-width="1.2" stroke-linejoin="round" />
<path d="M503.75 495C504 503 505 509 507.5 513.75C510 519 512 522 515 522.5L523.75 522.5C528 518 530 513 531.25 507.5C533 500 534.500 492 535 482.5L529 482L522.5 460Z" fill="#deb468" stroke="#000" stroke-width="1.2" stroke-linejoin="round" />
<path d="M515 522.5C520 519 523 513 525 507C527 500 528.500 492 529 482L535 482.5C534.500 492 533 500 531.25 507.5C530 513 528 518 523.75 522.5Z" fill="url(#gB)" stroke="#000" stroke-width="1.2" stroke-linejoin="round" />
<ellipse cx="515" cy="483" rx="4.200" ry="11" fill="#e8c074" stroke="#000" stroke-width=".9" transform="rotate(8 515 483)"/>
<path d="M478.75 435 L510 386.5 L514 420 L522.5 460 L492.5 495 L483.75 501 L478.75 500Z" fill="#deb468" stroke="#000" stroke-width="1.2" stroke-linejoin="round" />
<path d="M483.75 501 L492.5 495 L522.5 460 L524 466 L500 496 L487.5 503.5Z" fill="#c8a050" stroke="#000" stroke-width="0.9" stroke-linejoin="round" />
<ellipse cx="490" cy="453.75" rx="7.500" ry="18.5" fill="url(#gR)" stroke="#000" transform="rotate(8 490 453.75)"/>
<clipPath id="ch"><ellipse cx="490" cy="453.75" rx="7.500" ry="18.5" transform="rotate(8 490 453.75)"/></clipPath>
<ellipse cx="495.500" cy="456" rx="6" ry="17" fill="#b86010" clip-path="url(#ch)" transform="rotate(8 495 456)"/>
<path d="M810.6 246L813.75 245.4L805.6 261L800 276.6L798 300L802 318L797 312L793 296L793 286L796 271L801 258Z" fill="#4c44a0" stroke="#000" stroke-width="0.9" stroke-linejoin="round" />
<path d="M814.4 246.5 L822 247 L815 254Z" fill="#a85400" stroke="#000" stroke-width="0.8" stroke-linejoin="round" />
<path d="M817.5 379C816.2 374.2 812.5 359.0 810 350C807.5 341.0 804.2 333.3 802.5 325C800.8 316.7 800.4 306.7 800 300C799.6 293.3 798.5 291.2 800 285C801.5 278.8 804.6 269.2 808.75 262.5C812.9 255.8 819.0 249.2 825 245C831.0 240.8 838.2 239.2 845 237.5C851.8 235.8 860.0 235.2 866 235C872.0 234.8 877.4 236.2 881 236C884.6 235.8 883.1 235.4 887.5 233.75C891.9 232.1 898.8 227.6 907.5 226C916.2 224.4 934.6 224.7 940 224.4L1017.5 227.5C1018.4 228.1 1022.2 227.9 1023 231C1023.8 234.1 1023.4 241.8 1022.5 246C1021.6 250.2 1018.7 253.9 1017.5 256C1016.3 258.1 1014.2 256.6 1015.5 258.5C1016.8 260.4 1022.6 263.9 1025 267.5C1027.4 271.1 1029.0 275.8 1030 280C1031.0 284.2 1031.2 288.5 1031 292.5C1030.8 296.5 1028.9 301.6 1028.75 304C1028.6 306.4 1027.7 307.5 1030 307C1032.3 306.5 1038.3 304.0 1042.5 301C1046.7 298.0 1051.9 293.8 1055 288.75C1058.1 283.8 1060.2 276.5 1061 271C1061.8 265.5 1061.0 259.5 1060 256C1059.0 252.5 1056.0 252.3 1055 250C1054.0 247.7 1053.3 244.2 1053.75 242C1054.2 239.8 1056.0 237.8 1057.5 237C1059.0 236.2 1060.4 236.2 1062.5 237.5C1064.6 238.8 1067.8 241.7 1070 245C1072.2 248.3 1074.5 253.2 1076 257.5C1077.5 261.8 1078.8 266.0 1078.75 271C1078.8 276.0 1077.7 282.2 1076 287.5C1074.3 292.8 1072.2 297.9 1068.75 302.5C1065.2 307.1 1059.8 311.9 1055 315C1050.2 318.1 1045.0 319.7 1040 321C1035.0 322.3 1030.0 322.8 1025 323C1020.0 323.2 1012.5 322.6 1010 322.5L995 325L930 319.4C922 319.500 916 323 912.5 330L905 379Z" fill="#deb468" stroke="#000" stroke-width="1.2" stroke-linejoin="round" />
<path d="M847.5 492C850 500 860 510 870 515C880 519 890 520.5 892.5 520C905 519.500 920 513 930 502.5C934 498 936 495 937.5 492Z" fill="#deb468" stroke="#000" stroke-width="1.2" stroke-linejoin="round" />
<path d="M851 492C856 504 872 515 892 516C910 515 926 504 933 492" fill="none" stroke="#5c4410" stroke-width="2.5" stroke-linejoin="round" />
<path d="M832.5 316C833.8 310.8 836.2 294.3 840 285C843.8 275.7 848.3 267.5 855 260C861.7 252.5 871.2 245.2 880 240C888.8 234.8 897.5 230.8 907.5 228.75C917.5 226.7 934.6 227.7 940 227.5L1017 229.500" fill="none" stroke="#000" stroke-width="1.2" stroke-linejoin="round" />
<path d="M828.5 313.75C829.5 309.4 831.2 296.0 834.5 287.5C837.8 279.0 841.9 270.7 848 263C854.1 255.3 864.5 246.5 871 241.5C877.5 236.5 880.9 235.6 887 233C893.1 230.4 904.1 227.2 907.5 226" fill="none" stroke="#000" stroke-width="1.2" stroke-linejoin="round" />
<path d="M828.5 313.75L832.5 316" fill="none" stroke="#000" stroke-width="1.2" stroke-linejoin="round" />
<path d="M803 290C803.2 292.5 803.6 299.2 804.5 305C805.4 310.8 806.7 317.5 808.5 325C810.3 332.5 813.2 341.0 815.5 350C817.8 359.0 820.9 374.2 822 379" fill="none" stroke="#000" stroke-width="1.2" stroke-linejoin="round" />
<path d="M930 319.4L995 325L1010 322.5L1004 321L930 316.5Z" fill="#b48c3c" stroke="#000" stroke-width="0.8" stroke-linejoin="round" />
<path d="M1017.5 256C1016.2 257.5 1011.8 261.4 1010 265C1008.2 268.6 1007.2 273.5 1007 277.5C1006.8 281.5 1007.2 285.0 1008.75 288.75C1010.2 292.5 1012.5 297.0 1016 300C1019.5 303.0 1027.7 305.8 1030 307" fill="none" stroke="#000" stroke-width="0.9" stroke-linejoin="round" />
<path d="M1013 262C1013.8 263.7 1017.0 268.3 1018 272C1019.0 275.7 1019.3 280.7 1019 284C1018.7 287.3 1017.0 290.3 1016 292C1015.0 293.7 1013.5 293.7 1013 294" fill="#b48c3c" stroke="#000" stroke-width="0.7" stroke-linejoin="round" />
<path d="M1028 309C1030.7 308.2 1039.0 307.5 1044 304.5C1049.0 301.5 1054.6 296.6 1058 291C1061.4 285.4 1063.7 277.2 1064.5 271C1065.3 264.8 1064.1 258.0 1063 254C1061.9 250.0 1058.8 248.2 1058 247" fill="none" stroke="#000" stroke-width="0.8" stroke-linejoin="round" />
<path d="M1055 250L1053.75 242L1057.5 237L1058 246Z" fill="#c8a050" stroke="#000" stroke-width="0.8" stroke-linejoin="round" />
<path d="M829 314.4L821.500 379M833.500 315L826 379" fill="none" stroke="#38d828" stroke-width="1.7" stroke-linejoin="round" />
<path d="M831.200 314.700L823.700 379" fill="none" stroke="#283808" stroke-width="1" stroke-linejoin="round" stroke-dasharray="2 2"/>
<path d="M912.5 330L905 379M916 331L908.500 379" fill="none" stroke="#38d828" stroke-width="1.4" stroke-linejoin="round" />
<path d="M802.5 367.5 L811 367 L813 372.5 L805 373.5Z" fill="#403890" stroke="#000" stroke-width="0.8" stroke-linejoin="round" />
<path d="M805 373.5 L813 372.5 L815 379 L815 400 L811 400Z" fill="#a85400" stroke="#000" stroke-width="0.8" stroke-linejoin="round" />
<path d="M794 393L785 448L774 532M788 431.4L815 432M776 496.500L812 497.500M796 381L790 402M786 396L792 422M789 400L791 431L786 404M777.500 497L779 480L775.500 496" fill="none" stroke="#000" stroke-width="0.8" stroke-linejoin="round" />
<text x="0" y="0" transform="translate(779 460) rotate(100)" font-family="Liberation Sans,sans-serif" font-size="10" fill="#000">2</text>
<g><path d="M329.7 922L334.4 939.2" stroke="#1c7c2c" stroke-width="4.400"/><path d="M330 941L339 938.500L337.500 946Z" fill="#58c868" stroke="#1c7c2c" stroke-width=".6"/><path d="M329.7 921.8L313 921.500" stroke="#c82020" stroke-width="4"/><path d="M303.500 921.500L313 916.800V926.200Z" fill="#f06060" stroke="#c82020" stroke-width=".6"/><path d="M329.7 922L338 911.800" stroke="#1c1cc8" stroke-width="5"/><path d="M334.500 908L342.600 906.800L342.600 914.500L338 913Z" fill="#2828e8"/><text x="297.500" y="925.300" font-family="Liberation Sans,sans-serif" font-size="11" fill="#c02020" textLength="6.500" lengthAdjust="spacingAndGlyphs">X</text><text x="334" y="956" font-family="Liberation Sans,sans-serif" font-size="11.500" fill="#1c7c2c" textLength="7" lengthAdjust="spacingAndGlyphs">Y</text><text x="339.500" y="907.800" font-family="Liberation Sans,sans-serif" font-size="11" font-style="italic" fill="#1c1cc8" textLength="5.500" lengthAdjust="spacingAndGlyphs">Z</text></g>
</svg>
<div class="a" id="dlg" style="left:523px;top:309px;width:184px;height:114px;background:#d4d0c8;box-shadow:inset 1px 1px #d4d0c8,inset -1px -1px #404040,inset 2px 2px #fff,inset -2px -2px #808080">
 <div class="a" style="left:3px;top:3px;width:178px;height:18px;background:linear-gradient(90deg,#0a246a,#a6caf0)"></div>
 <div class="a" style="left:5px;top:4px;color:#fff;font-weight:bold;font-size:11.5px;line-height:15px;white-space:nowrap;transform:scaleX(1.02);transform-origin:0 0">Modifizieren</div>
 <div class="a raised" style="left:164px;top:5px;width:16px;height:14px"><svg style="left:4px;top:3px" width="8" height="7" viewBox="0 0 8 7"><path d="M0 0L8 7M8 0L0 7" stroke="#000" stroke-width="1.6"/></svg></div>
 <div class="a" style="left:3px;top:23px;width:161px;height:22px;background:#fff;box-shadow:inset 1px 1px #808080,inset 2px 2px #404040,inset -1px -1px #fff,inset -2px -2px #d4d0c8">
  <div class="a" style="left:3px;top:3px;height:13px;background:#0a246a;color:#fff;font-size:11px;line-height:13px;padding:0 1px;white-space:nowrap;transform:scaleX(.94);transform-origin:0 0">92.00Grad</div>
 </div>
 <div class="a raised" style="left:165px;top:24px;width:14px;height:10px"><svg style="left:5px;top:4px" width="4" height="2" viewBox="0 0 4 2"><path d="M0 2H4L2 0Z" fill="#000"/></svg></div>
 <div class="a raised" style="left:165px;top:34px;width:14px;height:10px"><svg style="left:5px;top:4px" width="4" height="2" viewBox="0 0 4 2"><path d="M0 0H4L2 2Z" fill="#000"/></svg></div>
 <div class="a" style="left:3px;top:57px;width:176px;height:22px;background:#fff;box-shadow:inset 1px 1px #808080,inset 2px 2px #404040,inset -1px -1px #fff,inset -2px -2px #d4d0c8">
  <div class="a" style="left:4px;top:4px;font-size:11px;line-height:14px;white-space:nowrap;transform:scaleX(.97);transform-origin:0 0">Diese Konfiguration</div>
  <div class="a raised" style="left:158px;top:2px;width:16px;height:18px"><svg style="left:4px;top:7px" width="7" height="4" viewBox="0 0 7 4"><path d="M0 0H7L3.500 4Z" fill="#000"/></svg></div>
 </div>
 <div class="a" style="left:3px;top:82px;width:178px;height:2px;border-top:1px solid #808080;border-bottom:1px solid #fff"></div>
 <div class="a raised" style="left:3px;top:86px;width:22px;height:23px"><svg style="left:4px;top:6px" width="14" height="12" viewBox="0 0 14 12"><path d="M1 6L5 10.500L13 1" fill="none" stroke="#108010" stroke-width="1.800"/></svg></div>
 <div class="a raised" style="left:26px;top:86px;width:22px;height:23px"><svg style="left:5px;top:5px" width="13" height="13" viewBox="0 0 13 13"><path d="M1 1L12 12M12 1L1 12" stroke="#e01010" stroke-width="2"/></svg></div>
 <div class="a raised" style="left:49px;top:86px;width:22px;height:23px"><svg style="left:6px;top:3px" width="10" height="17" viewBox="0 0 10 17"><rect x="1" y="1" width="8" height="15" rx="3" fill="#000"/><circle cx="5" cy="5" r="2" fill="#a03030"/><circle cx="5" cy="11.500" r="2.600" fill="#18d018"/></svg></div>
 <div class="a raised" style="left:72px;top:86px;width:22px;height:23px"><div class="a" style="left:2px;top:3px;width:18px;text-align:center;color:#0a0a90;font-weight:bold;font-size:14px;line-height:16px;letter-spacing:-.5px">±?</div></div>
</div>

</div>
<!-- v scrollbar -->
<div class="a chk" style="left:944px;top:2px;width:16px;height:891px"></div>
<div class="a raised" style="left:944px;top:2px;width:16px;height:6px"></div>
<div class="a raised" style="left:944px;top:8px;width:16px;height:17px"><svg style="left:4px;top:6px" width="7" height="4" viewBox="0 0 7 4"><path d="M0 4H7L3.5 0Z" fill="#000"/></svg></div>
<div class="a raised" style="left:944px;top:48px;width:16px;height:828px"></div>
<div class="a raised" style="left:944px;top:876px;width:16px;height:17px"><svg style="left:4px;top:6px" width="7" height="4" viewBox="0 0 7 4"><path d="M0 0H7L3.5 4Z" fill="#000"/></svg></div>
<!-- h scrollbar -->
<div class="a chk" style="left:2px;top:893px;width:942px;height:16px"></div>
<div class="a raised" style="left:2px;top:893px;width:6px;height:16px"></div>
<div class="a raised" style="left:8px;top:893px;width:17px;height:16px"><svg style="left:5px;top:4px" width="4" height="7" viewBox="0 0 4 7"><path d="M4 0V7L0 3.5Z" fill="#000"/></svg></div>
<div class="a raised" style="left:81px;top:893px;width:811px;height:16px"></div>
<div class="a raised" style="left:927px;top:893px;width:17px;height:16px"><svg style="left:6px;top:4px" width="4" height="7" viewBox="0 0 4 7"><path d="M0 0V7L4 3.5Z" fill="#000"/></svg></div>
<div class="a" style="left:944px;top:893px;width:16px;height:16px;background:#d4d0c8"></div>

</div>
<!-- RIGHT TOOLBAR -->
<div id="rightcol" class="a" style="left:1251px;top:68px;width:29px;height:910px">
<div class="a" style="left:0;top:0;width:1px;height:910px;background:#fff"></div>
<div class="a" style="left:0;top:0;width:29px;height:1px;background:#fff"></div>
<div class="a hgrip" style="left:3px;top:5px;width:23px"></div><div class="a hgrip" style="left:3px;top:8px;width:23px"></div>
<div class="a chk" style="left:3px;top:14px;width:24px;height:23px;box-shadow:inset 1px 1px #808080,inset -1px -1px #fff"></div>
<svg style="left:5.5px;top:16.0px" width="18" height="18" viewBox="0 0 18 18"><path d="M5.5 1.5V14L8.5 11L11 16.5L13 15.5L10.5 10.5H14.5Z" fill="#fff" stroke="#000" stroke-width="1.2"/></svg>
<svg style="left:5.5px;top:37.0px" width="18" height="18" viewBox="0 0 18 18"><path d="M3.500 1V16.500M7 1V16.500M10.500 1V16.500M14 1V16.500M1 3.500H16.500M1 7H16.500M1 10.500H16.500M1 14H16.500" stroke="#000" stroke-width=".7"/><rect x="2.6" y="2.6" width="1.800" height="1.800" fill="#000"/><rect x="2.6" y="6.1" width="1.800" height="1.800" fill="#000"/><rect x="2.6" y="9.6" width="1.800" height="1.800" fill="#000"/><rect x="2.6" y="13.1" width="1.800" height="1.800" fill="#000"/><rect x="6.1" y="2.6" width="1.800" height="1.800" fill="#000"/><rect x="6.1" y="6.1" width="1.800" height="1.800" fill="#000"/><rect x="6.1" y="9.6" width="1.800" height="1.800" fill="#000"/><rect x="6.1" y="13.1" width="1.800" height="1.800" fill="#000"/><rect x="9.6" y="2.6" width="1.800" height="1.800" fill="#000"/><rect x="9.6" y="6.1" width="1.800" height="1.800" fill="#000"/><rect x="9.6" y="9.6" width="1.800" height="1.800" fill="#000"/><rect x="9.6" y="13.1" width="1.800" height="1.800" fill="#000"/><rect x="13.1" y="2.6" width="1.800" height="1.800" fill="#000"/><rect x="13.1" y="6.1" width="1.800" height="1.800" fill="#000"/><rect x="13.1" y="9.6" width="1.800" height="1.800" fill="#000"/><rect x="13.1" y="13.1" width="1.800" height="1.800" fill="#000"/></svg>
<svg style="left:5.5px;top:59.0px" width="18" height="18" viewBox="0 0 18 18"><path d="M1 11L11 3" stroke="#e00000" stroke-width="1.2"/><path d="M1 11L6 16M11 3L16 8" stroke="#e00000" stroke-width="1"/><path d="M6 16L16 8" stroke="#000" stroke-width="1.2"/><path d="M2.5 7.5L1 11L4.5 10.5M9.5 6L11 3L7.5 3.5" stroke="#e00000" fill="none"/></svg>
<svg style="left:5.5px;top:81.0px" width="18" height="18" viewBox="0 0 18 18"><path d="M2 3V16H8" stroke="#0000c0" stroke-width="1.3" fill="none"/><path d="M6 15L8 9L14 2L17 4L11 12Z" fill="#f0e000" stroke="#000"/><path d="M14 2L15.5 .5L18 2.5L17 4Z" fill="#a00000" stroke="#000" stroke-width=".6"/><path d="M6 15L7 12L9 13.5Z" fill="#000"/></svg>
<div class="a" style="left:1px;top:103px;width:28px;height:2px;border-top:1px solid #808080;border-bottom:1px solid #fff"></div>
<div class="a hgrip" style="left:3px;top:109px;width:23px"></div><div class="a hgrip" style="left:3px;top:112px;width:23px"></div>
<svg style="left:5.5px;top:119.0px" width="18" height="18" viewBox="0 0 18 18" fill="none"><g transform="translate(1,1)" stroke="#fff" stroke-width="1"><path d="M9 2V14M3 14H16M9 10H13V14"/></g><g stroke="#848284" stroke-width="1"><path d="M9 2V14M3 14H16M9 10H13V14"/></g></svg>
<svg style="left:5.5px;top:139.0px" width="18" height="18" viewBox="0 0 18 18" fill="none"><g transform="translate(1,1)" stroke="#fff" stroke-width="1"><path d="M2 15H17M3 4V12H8V4M10 4V12H15V4M16 3L17 2" stroke-width="1.6"/></g><g stroke="#848284" stroke-width="1"><path d="M2 15H17M3 4V12H8V4M10 4V12H15V4M16 3L17 2" stroke-width="1.6"/></g></svg>
<div class="a" style="left:1px;top:161px;width:28px;height:2px;border-top:1px solid #808080;border-bottom:1px solid #fff"></div>
<div class="a hgrip" style="left:3px;top:167px;width:23px"></div><div class="a hgrip" style="left:3px;top:170px;width:23px"></div>
<svg style="left:5.5px;top:177.0px" width="18" height="18" viewBox="0 0 18 18" fill="none"><g transform="translate(1,1)" stroke="#fff" stroke-width="1"><path d="M2 2L16 16"/></g><g stroke="#848284" stroke-width="1"><path d="M2 2L16 16"/></g></svg>
<svg style="left:5.5px;top:199.0px" width="18" height="18" viewBox="0 0 18 18" fill="none"><g transform="translate(1,1)" stroke="#fff" stroke-width="1"><circle cx="9" cy="9" r="6.5" stroke-dasharray="1.5 1.5"/><path d="M7 9H11M9 7V11M14 14L16 16"/></g><g stroke="#848284" stroke-width="1"><circle cx="9" cy="9" r="6.5" stroke-dasharray="1.5 1.5"/><path d="M7 9H11M9 7V11M14 14L16 16"/></g></svg>
<svg style="left:5.5px;top:220.5px" width="18" height="18" viewBox="0 0 18 18" fill="none"><g transform="translate(1,1)" stroke="#fff" stroke-width="1"><path d="M2 3H9A6.5 6.5 0 0 1 9 16" stroke-dasharray="2 1.2"/><path d="M7 9H11M9 7V11M2 3H8"/></g><g stroke="#848284" stroke-width="1"><path d="M2 3H9A6.5 6.5 0 0 1 9 16" stroke-dasharray="2 1.2"/><path d="M7 9H11M9 7V11M2 3H8"/></g></svg>
<svg style="left:5.5px;top:242.0px" width="18" height="18" viewBox="0 0 18 18" fill="none"><g transform="translate(1,1)" stroke="#fff" stroke-width="1"><path d="M2.5 12A6.5 6.5 0 0 1 15.5 12" stroke-dasharray="2 1.2"/><path d="M7 12H11M9 10V14M1 13L3 11M15 11L17 13"/></g><g stroke="#848284" stroke-width="1"><path d="M2.5 12A6.5 6.5 0 0 1 15.5 12" stroke-dasharray="2 1.2"/><path d="M7 12H11M9 10V14M1 13L3 11M15 11L17 13"/></g></svg>
<svg style="left:5.5px;top:264.5px" width="18" height="18" viewBox="0 0 18 18" fill="none"><g transform="translate(1,1)" stroke="#fff" stroke-width="1"><circle cx="9" cy="9" r="6.5"/><path d="M7 9H11M9 7V11"/></g><g stroke="#848284" stroke-width="1"><circle cx="9" cy="9" r="6.5"/><path d="M7 9H11M9 7V11"/></g></svg>
<svg style="left:5.5px;top:287.0px" width="18" height="18" viewBox="0 0 18 18" fill="none"><g transform="translate(1,1)" stroke="#fff" stroke-width="1"><path d="M2 16C5 4 7 6 9 9C11 12 13 10 16 3" stroke-width="1.2"/></g><g stroke="#848284" stroke-width="1"><path d="M2 16C5 4 7 6 9 9C11 12 13 10 16 3" stroke-width="1.2"/></g></svg>
<svg style="left:5.5px;top:308.5px" width="18" height="18" viewBox="0 0 18 18" fill="none"><g transform="translate(1,1)" stroke="#fff" stroke-width="1"><path d="M5 2.5H13L17 9L13 15.5H5L1 9Z"/><path d="M7 9H11M9 7V11"/></g><g stroke="#848284" stroke-width="1"><path d="M5 2.5H13L17 9L13 15.5H5L1 9Z"/><path d="M7 9H11M9 7V11"/></g></svg>
<svg style="left:5.5px;top:331.0px" width="18" height="18" viewBox="0 0 18 18" fill="none"><g transform="translate(1,1)" stroke="#fff" stroke-width="1"><path d="M2 9L9 2L16 8L10 15Z"/><path d="M10 15L12 16"/></g><g stroke="#848284" stroke-width="1"><path d="M2 9L9 2L16 8L10 15Z"/><path d="M10 15L12 16"/></g></svg>
<svg style="left:5.5px;top:353.0px" width="18" height="18" viewBox="0 0 18 18" fill="none"><g transform="translate(1,1)" stroke="#fff" stroke-width="1"><path d="M3 5H15V12H3ZM1 3L4 6M14 11L17 14"/></g><g stroke="#848284" stroke-width="1"><path d="M3 5H15V12H3ZM1 3L4 6M14 11L17 14"/></g></svg>
<svg style="left:5.5px;top:374.5px" width="18" height="18" viewBox="0 0 18 18" fill="none"><g transform="translate(1,1)" stroke="#fff" stroke-width="1"><path d="M5 5L13 13M13 5L5 13"/></g><g stroke="#848284" stroke-width="1"><path d="M5 5L13 13M13 5L5 13"/></g></svg>
<svg style="left:5.5px;top:396.0px" width="18" height="18" viewBox="0 0 18 18" fill="none"><g transform="translate(1,1)" stroke="#fff" stroke-width="1"><path d="M9 1V17" stroke-dasharray="4 1 1 1"/></g><g stroke="#848284" stroke-width="1"><path d="M9 1V17" stroke-dasharray="4 1 1 1"/></g></svg>
<div class="a" style="left:5px;top:420px;width:20px;height:2px;border-top:1px solid #808080;border-bottom:1px solid #fff"></div>
<svg style="left:5.5px;top:426.5px" width="18" height="18" viewBox="0 0 18 18" fill="none"><g transform="translate(1,1)" stroke="#fff" stroke-width="1"><path d="M3 6H12V15H3ZM3 6L6 3H15L12 6M15 3V12L12 15"/></g><g stroke="#848284" stroke-width="1"><path d="M3 6H12V15H3ZM3 6L6 3H15L12 6M15 3V12L12 15"/></g></svg>
<svg style="left:5.5px;top:449.0px" width="18" height="18" viewBox="0 0 18 18" fill="none"><g transform="translate(1,1)" stroke="#fff" stroke-width="1"><path d="M9 1V4M2 14H16M4 14C6 11 5 4 9 4C13 4 12 11 14 14M7 14V16H11V14"/></g><g stroke="#848284" stroke-width="1"><path d="M9 1V4M2 14H16M4 14C6 11 5 4 9 4C13 4 12 11 14 14M7 14V16H11V14"/></g></svg>
<svg style="left:5.5px;top:471.0px" width="18" height="18" viewBox="0 0 18 18" fill="none"><g transform="translate(1,1)" stroke="#fff" stroke-width="1"><path d="M3 4H8A6 6 0 0 1 14 10V15"/></g><g stroke="#848284" stroke-width="1"><path d="M3 4H8A6 6 0 0 1 14 10V15"/></g></svg>
<svg style="left:5.5px;top:492.5px" width="18" height="18" viewBox="0 0 18 18" fill="none"><g transform="translate(1,1)" stroke="#fff" stroke-width="1"><path d="M3 4H9L14 9V15"/></g><g stroke="#848284" stroke-width="1"><path d="M3 4H9L14 9V15"/></g></svg>
<svg style="left:5.5px;top:514.5px" width="18" height="18" viewBox="0 0 18 18" fill="none"><g transform="translate(1,1)" stroke="#fff" stroke-width="1"><path d="M2 3H15V15M2 7H11V15" /><path d="M15 15L9 9" /></g><g stroke="#848284" stroke-width="1"><path d="M2 3H15V15M2 7H11V15" /><path d="M15 15L9 9" /></g></svg>
<svg style="left:5.5px;top:537.0px" width="18" height="18" viewBox="0 0 18 18" fill="none"><g transform="translate(1,1)" stroke="#fff" stroke-width="1"><path d="M3 15L9 3L15 15ZM6 11H12M7 15L9 8L11 15" stroke-dasharray="2 1"/></g><g stroke="#848284" stroke-width="1"><path d="M3 15L9 3L15 15ZM6 11H12M7 15L9 8L11 15" stroke-dasharray="2 1"/></g></svg>
<svg style="left:5.5px;top:559.0px" width="18" height="18" viewBox="0 0 18 18" fill="none"><g transform="translate(1,1)" stroke="#fff" stroke-width="1"><path d="M9 1V17M3 9H16M3 5L7 7M3 5V9"/></g><g stroke="#848284" stroke-width="1"><path d="M9 1V17M3 9H16M3 5L7 7M3 5V9"/></g></svg>
<svg style="left:5.5px;top:580.5px" width="18" height="18" viewBox="0 0 18 18" fill="none"><g transform="translate(1,1)" stroke="#fff" stroke-width="1"><path d="M4 2V16M13 2V16" stroke-width="1.6"/><path d="M6 6H12M6 12H12M9 4L6 6L9 8M9 10L6 12L9 14" stroke-dasharray="2 1"/></g><g stroke="#848284" stroke-width="1"><path d="M4 2V16M13 2V16" stroke-width="1.6"/><path d="M6 6H12M6 12H12M9 4L6 6L9 8M9 10L6 12L9 14" stroke-dasharray="2 1"/></g></svg>
<div class="a" style="left:5px;top:604px;width:20px;height:2px;border-top:1px solid #808080;border-bottom:1px solid #fff"></div>
<svg style="left:5.5px;top:610.0px" width="18" height="18" viewBox="0 0 18 18" fill="none"><g transform="translate(1,1)" stroke="#fff" stroke-width="1"><path d="M2 2H5V5H2ZM7.5 2H10.5V5H7.5ZM13 2H16V5H13ZM2 7.5H5V10.5H2ZM7.5 7.5H10.5V10.5H7.5ZM13 7.5H16V10.5H13ZM2 13H5V16H2ZM7.5 13H10.5V16H7.5ZM13 13H16V16H13Z" fill="#848284"/></g><g stroke="#848284" stroke-width="1"><path d="M2 2H5V5H2ZM7.5 2H10.5V5H7.5ZM13 2H16V5H13ZM2 7.5H5V10.5H2ZM7.5 7.5H10.5V10.5H7.5ZM13 7.5H16V10.5H13ZM2 13H5V16H2ZM7.5 13H10.5V16H7.5ZM13 13H16V16H13Z" fill="#848284"/></g></svg>
<svg style="left:5.5px;top:632.0px" width="18" height="18" viewBox="0 0 18 18" fill="none"><g transform="translate(1,1)" stroke="#fff" stroke-width="1"><circle cx="9" cy="3" r="1.6" fill="#848284"/><circle cx="3.5" cy="8" r="1.6" fill="#848284"/><circle cx="14.5" cy="8" r="1.6" fill="#848284"/><circle cx="5.5" cy="14.5" r="1.6" fill="#848284"/><circle cx="12.5" cy="14.5" r="1.6" fill="#848284"/></g><g stroke="#848284" stroke-width="1"><circle cx="9" cy="3" r="1.6" fill="#848284"/><circle cx="3.5" cy="8" r="1.6" fill="#848284"/><circle cx="14.5" cy="8" r="1.6" fill="#848284"/><circle cx="5.5" cy="14.5" r="1.6" fill="#848284"/><circle cx="12.5" cy="14.5" r="1.6" fill="#848284"/></g></svg>
<div class="a" style="left:1px;top:652px;width:28px;height:2px;border-top:1px solid #808080;border-bottom:1px solid #fff"></div>
<div class="a" style="left:1px;top:908px;width:28px;height:1px;background:#808080"></div>
</div>
<!-- STATUS BAR -->
<div id="status" class="a" style="left:0;top:978px;width:1280px;height:20px">
<div class="a" id="sbtext" style="left:2px;top:3px;font-size:11px;line-height:14px;white-space:nowrap;transform:scaleX(.975);transform-origin:0 0">Setzen Sie die Eigenschaften der ausgewählten Bemaßung(en) fest.</div>
<div class="a thin-s" style="left:1048px;top:2px;width:7px;height:17px"></div>
<div class="a thin-s" style="left:1056px;top:2px;width:7px;height:17px"></div>
<div class="a thin-s" style="left:1064px;top:2px;width:7px;height:17px"></div>
<div class="a thin-s" style="left:1072px;top:2px;width:151px;height:17px"><div class="a" style="left:2px;top:1px;font-size:11px;line-height:14px;white-space:nowrap">Bearbeiten Baugruppe</div></div>
<div class="a thin-s" style="left:1225px;top:2px;width:7px;height:17px"></div>
<div class="a thin-s" style="left:1233px;top:2px;width:7px;height:17px"></div>

</div>
<!-- TASKBAR -->
<div id="taskbar" class="a" style="left:0;top:998px;width:1280px;height:26px">
<div class="a" style="left:0;top:-1px;width:1280px;height:1px;background:#fff"></div>
<div class="a raised" style="left:2px;top:2px;width:52px;height:22px">
 <svg style="left:4px;top:3px" width="16" height="16" viewBox="0 0 16 16"><path d="M1 3C3 1.5 5 2 7 3L6 8C4 7 2 7 0 8Z" fill="#e04828"/><path d="M8 3.5C10 5 12 5 14 3.5L13 8.5C11 10 9 10 7 8.5Z" fill="#48a838"/><path d="M0 9C2 8 4 8 6 9L5 14C3 13 1 13 -1 14Z" fill="#3868d8"/><path d="M7 9.5C9 11 11 11 13 9.5L12 14.5C10 16 8 16 6 14.5Z" fill="#e8c020"/></svg>
 <div class="a" style="left:21px;top:4px;font-weight:bold;font-size:12px;line-height:14px;transform:scaleX(.96);transform-origin:0 0">Start</div>
</div>
<!-- quick launch -->
<svg style="left:61px;top:4px" width="18" height="18" viewBox="0 0 18 18"><rect x="2" y="2" width="14" height="14" rx="3" fill="#d8e8f8" stroke="#2060c0" stroke-width="1.5"/><path d="M5 9A4 4 0 1 0 9 5" fill="none" stroke="#2060c0" stroke-width="1.5"/><path d="M9 9L13 5" stroke="#c04000" stroke-width="1.5"/></svg>
<svg style="left:84px;top:4px" width="18" height="18" viewBox="0 0 18 18"><text x="3" y="15" font-family="Liberation Sans,sans-serif" font-size="17" font-weight="bold" fill="#2080e0">e</text><path d="M1 12C0 6 12 0 17 3" fill="none" stroke="#40a0f0" stroke-width="1.4"/></svg>
<svg style="left:107px;top:4px" width="18" height="18" viewBox="0 0 18 18"><rect x="5" y="2" width="11" height="11" fill="#e8f0f8" stroke="#3070c0"/><rect x="10" y="5" width="5" height="3" fill="#c04020"/><path d="M2 11A6 6 0 0 1 10 5L9 2L14 6L9 10L9 7A4 4 0 0 0 4 13Z" fill="#3080e0" stroke="#1040a0" stroke-width=".6"/></svg>
<svg style="left:129px;top:3px" width="19" height="19" viewBox="0 0 19 19"><path d="M9.5 1L12 7.5H18.5L13.2 11.5L15.3 18L9.5 14L3.7 18L5.8 11.5L.5 7.5H7Z" fill="#f8d020" stroke="#a07800" stroke-width="1"/></svg>
<svg style="left:153px;top:3px" width="17" height="17" viewBox="0 0 17 17"><rect x=".5" y=".5" width="16" height="16" fill="#101080"/><rect x="3" y="3" width="11" height="11" fill="#fff"/><text x="3.5" y="12.5" font-family="Liberation Sans,sans-serif" font-size="11" font-weight="bold" fill="#101080">W</text></svg>
<svg style="left:177px;top:3px" width="17" height="17" viewBox="0 0 17 17"><rect x=".5" y=".5" width="16" height="16" fill="#e0f0e0" stroke="#208030" stroke-width="1.5" stroke-dasharray="2 1"/><path d="M4 4L13 13M13 4L4 13" stroke="#208030" stroke-width="2.4"/></svg>
<svg style="left:199px;top:3px" width="18" height="18" viewBox="0 0 18 18"><path d="M2 3H13L16 6V16H2Z" fill="#f0e8e8" stroke="#c02020"/><path d="M4 14C7 12 9 8 8 4C10 9 13 11 15 11C11 11 7 12 4 14Z" fill="#e02020" stroke="#c02020"/></svg>
<svg style="left:223px;top:3px" width="17" height="18" viewBox="0 0 17 18"><rect x=".5" y=".5" width="16" height="17" fill="#fff" stroke="#000"/><path d="M3 12C6 10 8 7 7 3C9 8 11 9 14 9" fill="none" stroke="#c02020" stroke-width="1.5"/><rect x="6" y="10" width="7" height="5" fill="#fff" stroke="#000"/></svg>
<svg style="left:245px;top:4px" width="18" height="16" viewBox="0 0 18 16"><rect x="0" y="0" width="18" height="16" fill="#989890"/><path d="M2 9C6 4 12 4 16 9C12 13 6 13 2 9Z" fill="#c8c8c0"/><circle cx="9" cy="9" r="3" fill="#40a040"/><circle cx="9" cy="9" r="1.2" fill="#000"/></svg>
<svg style="left:269px;top:3px" width="15" height="18" viewBox="0 0 15 18"><path d="M1 3L4 1H14V15L11 17H1Z" fill="#c0c0b8" stroke="#404040"/><rect x="2.5" y="4.5" width="7" height="5" fill="#e0e0d8" stroke="#404040"/><rect x="2.5" y="10.5" width="7" height="5" fill="#e0e0d8" stroke="#404040"/><path d="M5 7H7M5 13H7" stroke="#404040"/></svg>
<svg style="left:291px;top:7px" width="20" height="11" viewBox="0 0 20 11"><path d="M1 5L8 1L19 4L12 9Z" fill="#e0e0e0" stroke="#808080"/><path d="M1 5V7L12 11V9Z" fill="#a0a0a0"/><path d="M12 9V11L19 6V4Z" fill="#808080"/></svg>
<svg style="left:314px;top:3px" width="18" height="19" viewBox="0 0 18 19"><path d="M1 4L9 1L17 4V15L9 18L1 15Z" fill="#c01010"/><path d="M1 4L9 1L17 4L9 7Z" fill="#e04040"/><text x="1.500" y="15" font-family="Liberation Sans,sans-serif" font-size="12" font-weight="bold" fill="#fff" textLength="15" lengthAdjust="spacingAndGlyphs">SW</text></svg>
<svg style="left:336px;top:3px" width="19" height="19" viewBox="0 0 19 19"><rect x="1" y="1" width="8" height="9" fill="#f0e020" stroke="#a09000"/><path d="M5 8L12 5L18 8V16L12 19L5 16Z" fill="#c01010"/><text x="6" y="16" font-family="Liberation Sans,sans-serif" font-size="7" font-weight="bold" fill="#fff">SW</text></svg>
<!-- task buttons -->
<div class="a chk" style="left:388px;top:2px;width:163px;height:22px;box-shadow:inset -1px -1px #fff,inset 1px 1px #404040,inset -2px -2px #d4d0c8,inset 2px 2px #808080">
 <svg style="left:5px;top:3px" width="17" height="17" viewBox="0 0 18 19"><path d="M1 4L9 1L17 4V15L9 18L1 15Z" fill="#c01010"/><path d="M1 4L9 1L17 4L9 7Z" fill="#e04040"/><text x="1.500" y="15" font-family="Liberation Sans,sans-serif" font-size="12" font-weight="bold" fill="#fff" textLength="15" lengthAdjust="spacingAndGlyphs">SW</text></svg>
 <div class="a" style="left:25px;top:5px;font-weight:bold;font-size:12px;line-height:14px;white-space:nowrap;transform:scaleX(1);transform-origin:0 0">SolidWorks 2003 - [St...</div>
</div>
<div class="a raised" style="left:553px;top:2px;width:159px;height:22px"><div class="a" style="left:22px;top:4px;font-size:11.5px;line-height:14px;white-space:nowrap;transform:scaleX(.93);transform-origin:0 0">Screenshots 2002</div></div>
<div class="a raised" style="left:714px;top:2px;width:161px;height:22px">
 <svg style="left:5px;top:4px" width="16" height="14" viewBox="0 0 16 14"><path d="M1 2.5H6L7.5 4H14.5V12.5H1Z" fill="#f0d868" stroke="#907010"/><path d="M1 12.5L3 6H15.5L14.5 12.5Z" fill="#f8e890" stroke="#907010"/></svg>
 <div class="a" style="left:24px;top:4px;font-size:11.5px;line-height:14px;white-space:nowrap;transform:scaleX(.96);transform-origin:0 0">C:\Screenshot</div>
</div>
<!-- tray -->
<div class="a thin-s" style="left:1144px;top:2px;width:134px;height:22px">
 <svg style="left:2px;top:2px" width="17" height="18" viewBox="0 0 17 18"><rect x="5" y="1" width="10" height="8" fill="#4860c0" stroke="#202860"/><rect x="1" y="6" width="10" height="8" fill="#8098e0" stroke="#202860"/><rect x="3" y="15" width="7" height="2" fill="#404880"/></svg>
 <svg style="left:20px;top:5px" width="18" height="13" viewBox="0 0 18 13"><path d="M1 5L8 1L17 5L10 10Z" fill="#d8d8d0" stroke="#606060"/><path d="M1 5V8L10 13V10Z" fill="#909088"/><path d="M10 10V13L17 8V5Z" fill="#707068"/><circle cx="12" cy="9" r="1.5" fill="#30c030"/></svg>
 <svg style="left:39px;top:3px" width="16" height="16" viewBox="0 0 16 16"><circle cx="8" cy="8" r="7.5" fill="#c8d8e8" stroke="#8090a0"/><path d="M8 8L2 3A7.5 7.5 0 0 1 8 .5Z" fill="#70b0e0"/><path d="M8 8L14 13A7.5 7.5 0 0 1 8 15.5Z" fill="#90c8f0"/><circle cx="8" cy="8" r="2" fill="#fff" stroke="#8090a0"/></svg>
 <svg style="left:57px;top:3px" width="17" height="16" viewBox="0 0 17 16"><rect x="0" y="0" width="17" height="16" fill="#a0a820"/><rect x="0" y="0" width="8" height="16" fill="#fff"/><path d="M2 8C5 3 11 3 14 8C11 12 5 12 2 8Z" fill="none" stroke="#000" stroke-width="1.3"/><path d="M5 8C7 6 10 6 11 8" fill="none" stroke="#000"/></svg>
 <svg style="left:75px;top:2px" width="16" height="18" viewBox="0 0 16 18"><path d="M4 2L10 1L12 6L8 8Z" fill="#e8d020"/><path d="M3 7L13 6L14 12L2 13Z" fill="#d02020"/><path d="M2 13L7 12L6 17H1Z M9 12L14 12L15 17H10Z" fill="#107010"/><circle cx="6" cy="4" r="1" fill="#000"/></svg>
 <div class="a" style="left:98px;top:4px;font-size:11.5px;line-height:14px">15:26</div>
</div>

</div>
</body>
</html>
